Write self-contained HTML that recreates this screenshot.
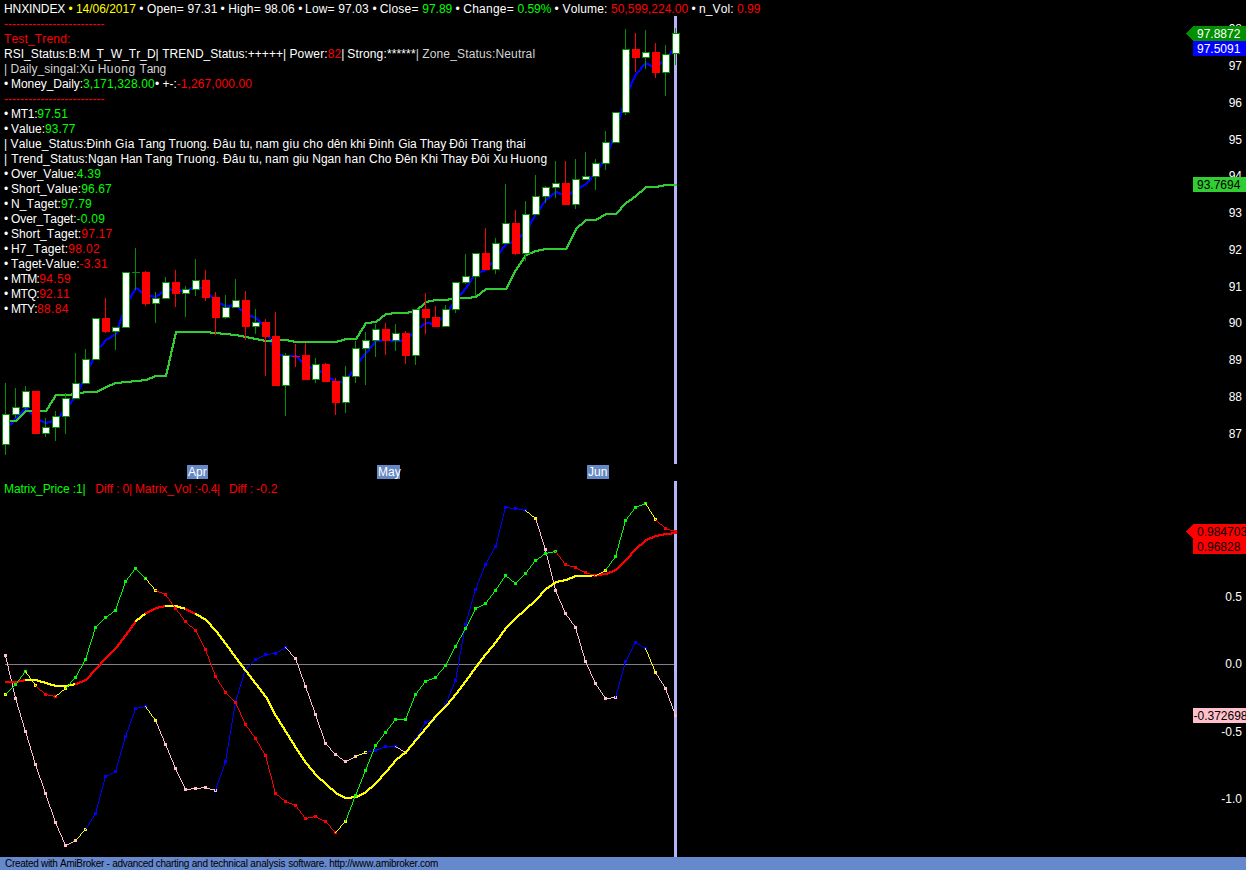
<!DOCTYPE html>
<html><head><meta charset="utf-8"><title>HNXINDEX</title>
<style>
html,body{margin:0;padding:0;background:#000;}
body{width:1246px;height:870px;position:relative;overflow:hidden;font-family:"Liberation Sans",sans-serif;font-size:12px;color:#fff;font-kerning:none;}
.l{position:absolute;left:4px;height:15px;line-height:15px;white-space:pre;}
.ax{position:absolute;right:4px;height:15px;line-height:15px;text-align:right;white-space:pre;}
.tg{position:absolute;height:15px;line-height:15px;white-space:pre;}
.mo{position:absolute;top:465px;height:14px;line-height:14px;background:#6688c4;color:#fff;padding-left:1px;box-sizing:border-box;}
#sb{position:absolute;left:0;top:857px;width:1246px;height:13px;background:#6688cc;color:#000;font-size:10px;line-height:13px;white-space:pre;}
</style></head><body>

<div class="ax" style="top:427px">87</div>
<div class="ax" style="top:390px">88</div>
<div class="ax" style="top:353px">89</div>
<div class="ax" style="top:316px">90</div>
<div class="ax" style="top:280px">91</div>
<div class="ax" style="top:243px">92</div>
<div class="ax" style="top:206px">93</div>
<div class="ax" style="top:169px">94</div>
<div class="ax" style="top:133px">95</div>
<div class="ax" style="top:96px">96</div>
<div class="ax" style="top:59px">97</div>
<div class="ax" style="top:22px">98</div>
<div class="ax" style="top:590px">0.5</div>
<div class="ax" style="top:657px">0.0</div>
<div class="ax" style="top:725px">-0.5</div>
<div class="ax" style="top:792px">-1.0</div>
<svg width="1246" height="870" viewBox="0 0 1246 870" style="position:absolute;left:0;top:0" shape-rendering="crispEdges">
<rect x="674" y="16" width="3" height="448" fill="#b4b4fa"/>
<rect x="674" y="481" width="3" height="376" fill="#b4b4fa"/>
<path fill="#0000ff" d="M5 429h2v2h-2zM6 428h2v2h-2zM7 427h2v2h-2zM8 425h2v3h-2zM9 424h2v2h-2zM10 423h2v2h-2zM11 422h2v2h-2zM12 421h2v2h-2zM13 419h2v3h-2zM14 418h2v2h-2zM15 417h2v2h-2zM15 417h2v2h-2zM16 416h2v2h-2zM17 415h2v2h-2zM18 414h2v2h-2zM19 413h2v2h-2zM20 412h2v2h-2zM21 411h2v2h-2zM22 410h2v2h-2zM23 409h2v2h-2zM24 408h2v2h-2zM25 407h2v2h-2zM25 407h2v2h-2zM26 408h2v2h-2zM27 409h2v2h-2zM28 410h2v2h-2zM29 411h2v2h-2zM30 412h2v2h-2zM31 413h2v2h-2zM32 414h2v2h-2zM33 415h2v2h-2zM34 416h2v2h-2zM35 417h2v2h-2zM35 417h2v2h-2zM36 418h3v2h-3zM38 419h3v2h-3zM40 420h3v2h-3zM42 421h3v2h-3zM44 422h3v2h-3zM45 422h3v2h-3zM47 421h5v2h-5zM51 420h4v2h-4zM54 419h3v2h-3zM55 419h2v2h-2zM56 418h2v2h-2zM57 417h2v2h-2zM58 416h2v2h-2zM59 415h2v2h-2zM60 413h2v3h-2zM61 412h2v2h-2zM62 411h2v2h-2zM63 410h2v2h-2zM64 409h2v2h-2zM65 408h2v2h-2zM65 408h2v2h-2zM66 407h2v2h-2zM67 405h2v3h-2zM68 404h2v2h-2zM69 403h2v2h-2zM70 401h2v3h-2zM71 400h2v2h-2zM72 399h2v2h-2zM73 397h2v3h-2zM74 396h2v2h-2zM75 395h2v2h-2zM75 394h2v3h-2zM76 392h2v3h-2zM77 390h2v3h-2zM78 388h2v3h-2zM79 386h2v3h-2zM80 384h2v3h-2zM81 382h2v3h-2zM82 380h2v3h-2zM83 378h2v3h-2zM84 376h2v3h-2zM85 374h2v3h-2zM85 373h2v3h-2zM86 371h2v3h-2zM87 369h2v3h-2zM88 366h2v4h-2zM89 364h2v3h-2zM90 362h2v3h-2zM91 360h2v3h-2zM92 357h2v4h-2zM93 355h2v3h-2zM94 353h2v3h-2zM95 351h2v3h-2zM95 351h2v2h-2zM96 350h2v2h-2zM97 349h2v2h-2zM98 347h2v3h-2zM99 346h2v2h-2zM100 345h2v2h-2zM101 344h2v2h-2zM102 343h2v2h-2zM103 341h2v3h-2zM104 340h2v2h-2zM105 339h2v2h-2zM105 339h2v2h-2zM106 338h3v2h-3zM108 337h3v2h-3zM110 336h2v2h-2zM111 335h3v2h-3zM113 334h3v2h-3zM115 333h2v2h-2zM115 332h2v3h-2zM116 329h2v4h-2zM117 326h2v4h-2zM118 323h2v4h-2zM119 320h2v4h-2zM120 318h2v3h-2zM121 315h2v4h-2zM122 312h2v4h-2zM123 309h2v4h-2zM124 306h2v4h-2zM125 304h2v3h-2zM125 304h2v2h-2zM126 302h2v3h-2zM127 300h2v3h-2zM128 299h2v2h-2zM129 297h2v3h-2zM130 295h2v3h-2zM131 293h2v3h-2zM132 292h2v2h-2zM133 290h2v3h-2zM134 288h2v3h-2zM135 287h2v2h-2zM135 287h2v2h-2zM136 288h3v2h-3zM138 289h2v2h-2zM139 290h2v2h-2zM140 291h3v2h-3zM142 292h2v2h-2zM143 293h3v2h-3zM145 294h2v2h-2zM145 294h4v2h-4zM148 295h6v2h-6zM153 296h4v2h-4zM155 296h2v2h-2zM156 295h2v2h-2zM157 294h3v2h-3zM159 293h2v2h-2zM160 292h2v2h-2zM161 291h2v2h-2zM162 290h3v2h-3zM164 289h2v2h-2zM165 288h2v2h-2zM165 288h6v2h-6zM170 289h7v2h-7zM175 289h6v2h-6zM180 290h7v2h-7zM185 290h3v2h-3zM187 289h3v2h-3zM189 288h3v2h-3zM191 287h3v2h-3zM193 286h3v2h-3zM195 285h2v2h-2zM195 285h3v2h-3zM197 286h3v2h-3zM199 287h4v2h-4zM202 288h3v2h-3zM204 289h3v2h-3zM205 289h2v2h-2zM206 290h2v2h-2zM207 291h2v2h-2zM208 292h2v3h-2zM209 294h2v2h-2zM210 295h2v2h-2zM211 296h2v2h-2zM212 297h2v2h-2zM213 298h2v3h-2zM214 300h2v2h-2zM215 301h2v2h-2zM215 301h3v2h-3zM217 302h3v2h-3zM219 303h4v2h-4zM222 304h3v2h-3zM224 305h3v2h-3zM225 305h7v2h-7zM231 304h6v2h-6zM235 304h2v2h-2zM236 305h2v2h-2zM237 306h2v2h-2zM238 307h2v2h-2zM239 308h2v2h-2zM240 309h3v2h-3zM242 310h2v2h-2zM243 311h2v2h-2zM244 312h2v2h-2zM245 313h2v2h-2zM245 313h3v2h-3zM247 314h3v2h-3zM249 315h4v2h-4zM252 316h3v2h-3zM254 317h3v2h-3zM255 317h2v2h-2zM256 318h2v2h-2zM257 319h2v2h-2zM258 320h2v2h-2zM259 321h2v2h-2zM260 322h2v2h-2zM261 323h2v2h-2zM262 324h2v2h-2zM263 325h2v2h-2zM264 326h2v2h-2zM265 327h2v2h-2zM265 327h2v3h-2zM266 329h2v3h-2zM267 331h2v4h-2zM268 334h2v4h-2zM269 337h2v3h-2zM270 339h2v4h-2zM271 342h2v3h-2zM272 344h2v4h-2zM273 347h2v4h-2zM274 350h2v3h-2zM275 352h2v3h-2zM275 353h4v2h-4zM278 354h6v2h-6zM283 355h4v2h-4zM285 355h12v2h-12zM295 355h2v2h-2zM296 356h2v2h-2zM297 357h2v2h-2zM298 358h2v2h-2zM299 359h2v2h-2zM300 360h2v2h-2zM301 361h2v2h-2zM302 362h2v2h-2zM303 363h2v2h-2zM304 364h2v2h-2zM305 365h2v2h-2zM305 365h3v2h-3zM307 366h4v2h-4zM310 367h5v2h-5zM314 368h3v2h-3zM315 368h2v2h-2zM316 369h3v2h-3zM318 370h3v2h-3zM320 371h3v2h-3zM322 372h3v2h-3zM324 373h3v2h-3zM325 373h2v2h-2zM326 374h2v2h-2zM327 375h2v2h-2zM328 376h2v2h-2zM329 377h2v2h-2zM330 378h3v2h-3zM332 379h2v2h-2zM333 380h2v2h-2zM334 381h2v2h-2zM335 382h2v2h-2zM335 382h4v2h-4zM338 381h6v2h-6zM343 380h4v2h-4zM345 380h2v2h-2zM346 378h2v3h-2zM347 377h2v2h-2zM348 375h2v3h-2zM349 374h2v2h-2zM350 372h2v3h-2zM351 371h2v2h-2zM352 369h2v3h-2zM353 368h2v2h-2zM354 366h2v3h-2zM355 365h2v2h-2zM355 365h2v2h-2zM356 364h2v2h-2zM357 362h2v3h-2zM358 361h2v2h-2zM359 360h2v2h-2zM360 358h2v3h-2zM361 357h2v2h-2zM362 356h2v2h-2zM363 354h2v3h-2zM364 353h2v2h-2zM365 352h2v2h-2zM365 352h2v2h-2zM366 351h2v2h-2zM367 350h2v2h-2zM368 348h2v3h-2zM369 347h2v2h-2zM370 346h2v2h-2zM371 345h2v2h-2zM372 344h2v2h-2zM373 342h2v3h-2zM374 341h2v2h-2zM375 340h2v2h-2zM375 340h7v2h-7zM381 339h6v2h-6zM385 339h6v2h-6zM390 340h7v2h-7zM395 340h7v2h-7zM401 339h6v2h-6zM405 339h2v2h-2zM406 338h2v2h-2zM407 337h2v2h-2zM408 336h2v2h-2zM409 335h2v2h-2zM410 334h2v2h-2zM411 333h2v2h-2zM412 332h2v2h-2zM413 331h2v2h-2zM414 330h2v2h-2zM415 329h2v2h-2zM415 329h2v2h-2zM416 328h3v2h-3zM418 327h2v2h-2zM419 326h3v2h-3zM421 325h2v2h-2zM422 324h2v2h-2zM423 323h3v2h-3zM425 322h2v2h-2zM425 322h6v2h-6zM430 323h7v2h-7zM435 323h2v2h-2zM436 322h2v2h-2zM437 321h2v2h-2zM438 320h2v2h-2zM439 319h2v2h-2zM440 318h2v2h-2zM441 317h2v2h-2zM442 316h2v2h-2zM443 315h2v2h-2zM444 314h2v2h-2zM445 313h2v2h-2zM445 313h2v2h-2zM446 311h2v3h-2zM447 310h2v2h-2zM448 309h2v2h-2zM449 307h2v3h-2zM450 306h2v2h-2zM451 304h2v3h-2zM452 303h2v2h-2zM453 302h2v2h-2zM454 300h2v3h-2zM455 299h2v2h-2zM455 299h2v2h-2zM456 298h2v2h-2zM457 297h2v2h-2zM458 295h2v3h-2zM459 294h2v2h-2zM460 293h2v2h-2zM461 292h2v2h-2zM462 291h2v2h-2zM463 289h2v3h-2zM464 288h2v2h-2zM465 287h2v2h-2zM465 287h2v2h-2zM466 285h2v3h-2zM467 284h2v2h-2zM468 282h2v3h-2zM469 281h2v2h-2zM470 279h2v3h-2zM471 278h2v2h-2zM472 276h2v3h-2zM473 275h2v2h-2zM474 273h2v3h-2zM475 272h2v2h-2zM475 272h3v2h-3zM477 271h5v2h-5zM481 270h4v2h-4zM484 269h3v2h-3zM485 269h2v2h-2zM486 268h2v2h-2zM487 267h2v2h-2zM488 265h2v3h-2zM489 264h2v2h-2zM490 263h2v2h-2zM491 262h2v2h-2zM492 261h2v2h-2zM493 259h2v3h-2zM494 258h2v2h-2zM495 257h2v2h-2zM495 257h2v2h-2zM496 255h2v3h-2zM497 254h2v2h-2zM498 253h2v2h-2zM499 251h2v3h-2zM500 250h2v2h-2zM501 248h2v3h-2zM502 247h2v2h-2zM503 246h2v2h-2zM504 244h2v3h-2zM505 243h2v2h-2zM505 243h3v2h-3zM507 242h5v2h-5zM511 241h4v2h-4zM514 240h3v2h-3zM515 240h2v2h-2zM516 239h2v2h-2zM517 238h2v2h-2zM518 237h2v2h-2zM519 236h2v2h-2zM520 235h2v2h-2zM521 234h2v2h-2zM522 233h2v2h-2zM523 232h2v2h-2zM524 231h2v2h-2zM525 230h2v2h-2zM525 230h2v2h-2zM526 228h2v3h-2zM527 226h2v3h-2zM528 225h2v2h-2zM529 223h2v3h-2zM530 221h2v3h-2zM531 219h2v3h-2zM532 218h2v2h-2zM533 216h2v3h-2zM534 214h2v3h-2zM535 213h2v2h-2zM535 213h2v2h-2zM536 211h2v3h-2zM537 210h2v2h-2zM538 209h2v2h-2zM539 207h2v3h-2zM540 206h2v2h-2zM541 204h2v3h-2zM542 203h2v2h-2zM543 202h2v2h-2zM544 200h2v3h-2zM545 199h2v2h-2zM545 199h2v2h-2zM546 198h2v2h-2zM547 197h3v2h-3zM549 196h2v2h-2zM550 195h2v2h-2zM551 194h2v2h-2zM552 193h3v2h-3zM554 192h2v2h-2zM555 191h2v2h-2zM555 191h3v2h-3zM557 192h3v2h-3zM559 193h4v2h-4zM562 194h3v2h-3zM564 195h3v2h-3zM565 195h2v2h-2zM566 194h3v2h-3zM568 193h3v2h-3zM570 192h2v2h-2zM571 191h3v2h-3zM573 190h3v2h-3zM575 189h2v2h-2zM575 189h2v2h-2zM576 188h3v2h-3zM578 187h3v2h-3zM580 186h2v2h-2zM581 185h3v2h-3zM583 184h3v2h-3zM585 183h2v2h-2zM585 183h2v2h-2zM586 182h2v2h-2zM587 181h2v2h-2zM588 180h2v2h-2zM589 179h2v2h-2zM590 177h2v3h-2zM591 176h2v2h-2zM592 175h2v2h-2zM593 174h2v2h-2zM594 173h2v2h-2zM595 172h2v2h-2zM595 172h2v2h-2zM596 170h2v3h-2zM597 169h2v2h-2zM598 167h2v3h-2zM599 165h2v3h-2zM600 164h2v2h-2zM601 162h2v3h-2zM602 161h2v2h-2zM603 159h2v3h-2zM604 157h2v3h-2zM605 156h2v2h-2zM605 155h2v3h-2zM606 153h2v3h-2zM607 150h2v4h-2zM608 148h2v3h-2zM609 145h2v4h-2zM610 143h2v3h-2zM611 140h2v4h-2zM612 138h2v3h-2zM613 135h2v4h-2zM614 133h2v3h-2zM615 131h2v3h-2zM615 130h2v3h-2zM616 126h2v5h-2zM617 123h2v4h-2zM618 119h2v5h-2zM619 115h2v5h-2zM620 112h2v4h-2zM621 108h2v5h-2zM622 105h2v4h-2zM623 101h2v5h-2zM624 97h2v5h-2zM625 95h2v3h-2zM625 94h2v3h-2zM626 92h2v3h-2zM627 90h2v3h-2zM628 88h2v3h-2zM629 86h2v3h-2zM630 83h2v4h-2zM631 81h2v3h-2zM632 79h2v3h-2zM633 77h2v3h-2zM634 75h2v3h-2zM635 73h2v3h-2zM635 73h2v2h-2zM636 72h2v2h-2zM637 71h2v2h-2zM638 70h2v2h-2zM639 69h2v2h-2zM640 67h2v3h-2zM641 66h2v2h-2zM642 65h2v2h-2zM643 64h2v2h-2zM644 63h2v2h-2zM645 62h2v2h-2zM645 62h2v2h-2zM646 63h3v2h-3zM648 64h3v2h-3zM650 65h3v2h-3zM652 66h3v2h-3zM654 67h3v2h-3zM655 67h2v2h-2zM656 66h2v2h-2zM657 65h2v2h-2zM658 64h2v2h-2zM659 63h2v2h-2zM660 62h2v2h-2zM661 61h2v2h-2zM662 60h2v2h-2zM663 59h2v2h-2zM664 58h2v2h-2zM665 57h2v2h-2zM665 57h2v2h-2zM666 56h2v2h-2zM667 55h2v2h-2zM668 54h2v2h-2zM669 53h2v2h-2zM670 51h2v3h-2zM671 50h2v2h-2zM672 49h2v2h-2zM673 48h2v2h-2zM674 47h2v2h-2zM675 46h2v2h-2z"/>
<path fill="#32cd32" d="M5 420h12v2h-12zM15 420h2v2h-2zM16 419h2v2h-2zM17 418h2v2h-2zM18 417h2v2h-2zM19 416h2v2h-2zM20 415h2v2h-2zM21 414h2v2h-2zM22 413h2v2h-2zM23 412h2v2h-2zM24 411h2v2h-2zM25 410h2v2h-2zM25 410h12v2h-12zM35 410h12v2h-12zM45 410h2v2h-2zM46 408h2v3h-2zM47 407h2v2h-2zM48 405h2v3h-2zM49 403h2v3h-2zM50 402h2v2h-2zM51 400h2v3h-2zM52 399h2v2h-2zM53 397h2v3h-2zM54 395h2v3h-2zM55 394h2v2h-2zM55 394h12v2h-12zM65 394h7v2h-7zM71 393h6v2h-6zM75 393h4v2h-4zM78 392h6v2h-6zM83 391h4v2h-4zM85 391h12v2h-12zM95 391h3v2h-3zM97 390h3v2h-3zM99 389h3v2h-3zM101 388h3v2h-3zM103 387h3v2h-3zM105 386h2v2h-2zM105 386h3v2h-3zM107 385h3v2h-3zM109 384h4v2h-4zM112 383h3v2h-3zM114 382h3v2h-3zM115 382h7v2h-7zM121 381h6v2h-6zM125 381h7v2h-7zM131 380h6v2h-6zM135 380h7v2h-7zM141 379h6v2h-6zM145 379h3v2h-3zM147 378h3v2h-3zM149 377h4v2h-4zM152 376h3v2h-3zM154 375h3v2h-3zM155 375h12v2h-12zM165 373h2v4h-2zM166 369h2v5h-2zM167 365h2v5h-2zM168 360h2v6h-2zM169 356h2v5h-2zM170 351h2v6h-2zM171 347h2v5h-2zM172 343h2v5h-2zM173 338h2v6h-2zM174 334h2v5h-2zM175 331h2v4h-2zM175 331h12v2h-12zM185 331h12v2h-12zM195 331h12v2h-12zM205 331h6v2h-6zM210 332h7v2h-7zM215 332h6v2h-6zM220 333h7v2h-7zM225 333h6v2h-6zM230 334h7v2h-7zM235 334h4v2h-4zM238 335h6v2h-6zM243 336h4v2h-4zM245 336h4v2h-4zM248 337h6v2h-6zM253 338h4v2h-4zM255 338h4v2h-4zM258 339h6v2h-6zM263 340h4v2h-4zM265 340h7v2h-7zM271 339h6v2h-6zM275 339h12v2h-12zM285 339h4v2h-4zM288 340h6v2h-6zM293 341h4v2h-4zM295 341h12v2h-12zM305 341h12v2h-12zM315 341h12v2h-12zM325 341h12v2h-12zM335 341h3v2h-3zM337 340h5v2h-5zM341 339h4v2h-4zM344 338h3v2h-3zM345 338h12v2h-12zM355 338h2v2h-2zM356 336h2v3h-2zM357 335h2v2h-2zM358 333h2v3h-2zM359 331h2v3h-2zM360 330h2v2h-2zM361 328h2v3h-2zM362 327h2v2h-2zM363 325h2v3h-2zM364 323h2v3h-2zM365 322h2v2h-2zM365 322h7v2h-7zM371 321h6v2h-6zM375 321h2v2h-2zM376 320h2v2h-2zM377 319h3v2h-3zM379 318h2v2h-2zM380 317h2v2h-2zM381 316h2v2h-2zM382 315h3v2h-3zM384 314h2v2h-2zM385 313h2v2h-2zM385 313h7v2h-7zM391 312h6v2h-6zM395 312h12v2h-12zM405 312h4v2h-4zM408 311h6v2h-6zM413 310h4v2h-4zM415 310h2v2h-2zM416 309h2v2h-2zM417 308h2v2h-2zM418 307h2v2h-2zM419 306h3v2h-3zM421 305h2v2h-2zM422 304h2v2h-2zM423 303h2v2h-2zM424 302h2v2h-2zM425 301h2v2h-2zM425 301h4v2h-4zM428 300h6v2h-6zM433 299h4v2h-4zM435 299h12v2h-12zM445 299h4v2h-4zM448 298h6v2h-6zM453 297h4v2h-4zM455 297h12v2h-12zM465 297h7v2h-7zM471 296h6v2h-6zM475 296h2v2h-2zM476 295h2v2h-2zM477 294h3v2h-3zM479 293h2v2h-2zM480 292h2v2h-2zM481 291h2v2h-2zM482 290h3v2h-3zM484 289h2v2h-2zM485 288h2v2h-2zM485 288h12v2h-12zM495 288h12v2h-12zM505 288h2v2h-2zM506 286h2v3h-2zM507 284h2v3h-2zM508 282h2v3h-2zM509 280h2v3h-2zM510 278h2v3h-2zM511 276h2v3h-2zM512 274h2v3h-2zM513 272h2v3h-2zM514 270h2v3h-2zM515 269h2v2h-2zM515 269h2v2h-2zM516 267h2v3h-2zM517 266h2v2h-2zM518 264h2v3h-2zM519 263h2v2h-2zM520 261h2v3h-2zM521 260h2v2h-2zM522 258h2v3h-2zM523 257h2v2h-2zM524 255h2v3h-2zM525 254h2v2h-2zM525 254h3v2h-3zM527 253h3v2h-3zM529 252h4v2h-4zM532 251h3v2h-3zM534 250h3v2h-3zM535 250h4v2h-4zM538 249h6v2h-6zM543 248h4v2h-4zM545 248h12v2h-12zM555 248h12v2h-12zM565 248h2v2h-2zM566 246h2v3h-2zM567 244h2v3h-2zM568 242h2v3h-2zM569 240h2v3h-2zM570 238h2v3h-2zM571 236h2v3h-2zM572 234h2v3h-2zM573 232h2v3h-2zM574 230h2v3h-2zM575 228h2v3h-2zM575 228h2v2h-2zM576 227h2v2h-2zM577 226h2v2h-2zM578 225h2v2h-2zM579 224h3v2h-3zM581 223h2v2h-2zM582 222h2v2h-2zM583 221h2v2h-2zM584 220h2v2h-2zM585 219h2v2h-2zM585 219h12v2h-12zM595 219h2v2h-2zM596 218h3v2h-3zM598 217h3v2h-3zM600 216h2v2h-2zM601 215h3v2h-3zM603 214h3v2h-3zM605 213h2v2h-2zM605 213h12v2h-12zM615 213h2v2h-2zM616 212h2v2h-2zM617 211h2v2h-2zM618 210h2v2h-2zM619 209h2v2h-2zM620 207h2v3h-2zM621 206h2v2h-2zM622 205h2v2h-2zM623 204h2v2h-2zM624 203h2v2h-2zM625 202h2v2h-2zM625 202h2v2h-2zM626 201h3v2h-3zM628 200h2v2h-2zM629 199h3v2h-3zM631 198h2v2h-2zM632 197h2v2h-2zM633 196h3v2h-3zM635 195h2v2h-2zM635 195h2v2h-2zM636 194h2v2h-2zM637 193h2v2h-2zM638 192h2v2h-2zM639 191h3v2h-3zM641 190h2v2h-2zM642 189h2v2h-2zM643 188h2v2h-2zM644 187h2v2h-2zM645 186h2v2h-2zM645 186h12v2h-12zM655 186h4v2h-4zM658 185h6v2h-6zM663 184h4v2h-4zM665 184h12v2h-12z"/>
<rect x="5" y="383" width="1" height="72" fill="#009000"/>
<rect x="2" y="414" width="8" height="31" fill="#009000"/>
<rect x="3" y="415" width="6" height="29" fill="#fff"/>
<rect x="15" y="388" width="1" height="30" fill="#009000"/>
<rect x="12" y="407" width="8" height="8" fill="#009000"/>
<rect x="13" y="408" width="6" height="6" fill="#fff"/>
<rect x="25" y="386" width="1" height="23" fill="#009000"/>
<rect x="22" y="391" width="8" height="17" fill="#009000"/>
<rect x="23" y="392" width="6" height="15" fill="#fff"/>
<rect x="35" y="391" width="1" height="43" fill="#ff0000"/>
<rect x="32" y="391" width="8" height="43" fill="#ff0000"/>
<rect x="45" y="418" width="1" height="19" fill="#009000"/>
<rect x="42" y="427" width="8" height="7" fill="#009000"/>
<rect x="43" y="428" width="6" height="5" fill="#fff"/>
<rect x="55" y="411" width="1" height="30" fill="#009000"/>
<rect x="52" y="416" width="8" height="12" fill="#009000"/>
<rect x="53" y="417" width="6" height="10" fill="#fff"/>
<rect x="65" y="393" width="1" height="41" fill="#009000"/>
<rect x="62" y="398" width="8" height="19" fill="#009000"/>
<rect x="63" y="399" width="6" height="17" fill="#fff"/>
<rect x="75" y="353" width="1" height="45" fill="#009000"/>
<rect x="72" y="383" width="8" height="16" fill="#009000"/>
<rect x="73" y="384" width="6" height="14" fill="#fff"/>
<rect x="85" y="349" width="1" height="35" fill="#009000"/>
<rect x="82" y="359" width="8" height="25" fill="#009000"/>
<rect x="83" y="360" width="6" height="23" fill="#fff"/>
<rect x="95" y="318" width="1" height="41" fill="#009000"/>
<rect x="92" y="318" width="8" height="42" fill="#009000"/>
<rect x="93" y="319" width="6" height="40" fill="#fff"/>
<rect x="105" y="298" width="1" height="35" fill="#ff0000"/>
<rect x="102" y="318" width="8" height="14" fill="#ff0000"/>
<rect x="115" y="327" width="1" height="23" fill="#009000"/>
<rect x="112" y="327" width="8" height="5" fill="#009000"/>
<rect x="113" y="328" width="6" height="3" fill="#fff"/>
<rect x="125" y="272" width="1" height="55" fill="#009000"/>
<rect x="122" y="272" width="8" height="56" fill="#009000"/>
<rect x="123" y="273" width="6" height="54" fill="#fff"/>
<rect x="135" y="248" width="1" height="42" fill="#009000"/>
<rect x="132" y="272" width="8" height="1" fill="#009000"/>
<rect x="145" y="271" width="1" height="35" fill="#ff0000"/>
<rect x="142" y="272" width="8" height="32" fill="#ff0000"/>
<rect x="155" y="292" width="1" height="31" fill="#009000"/>
<rect x="152" y="298" width="8" height="6" fill="#009000"/>
<rect x="153" y="299" width="6" height="4" fill="#fff"/>
<rect x="165" y="277" width="1" height="21" fill="#009000"/>
<rect x="162" y="282" width="8" height="17" fill="#009000"/>
<rect x="163" y="283" width="6" height="15" fill="#fff"/>
<rect x="175" y="270" width="1" height="37" fill="#ff0000"/>
<rect x="172" y="282" width="8" height="12" fill="#ff0000"/>
<rect x="185" y="286" width="1" height="31" fill="#009000"/>
<rect x="182" y="289" width="8" height="5" fill="#009000"/>
<rect x="183" y="290" width="6" height="3" fill="#fff"/>
<rect x="195" y="259" width="1" height="37" fill="#009000"/>
<rect x="192" y="280" width="8" height="10" fill="#009000"/>
<rect x="193" y="281" width="6" height="8" fill="#fff"/>
<rect x="205" y="270" width="1" height="31" fill="#ff0000"/>
<rect x="202" y="280" width="8" height="18" fill="#ff0000"/>
<rect x="215" y="292" width="1" height="43" fill="#ff0000"/>
<rect x="212" y="297" width="8" height="21" fill="#ff0000"/>
<rect x="225" y="295" width="1" height="24" fill="#009000"/>
<rect x="222" y="307" width="8" height="11" fill="#009000"/>
<rect x="223" y="308" width="6" height="9" fill="#fff"/>
<rect x="235" y="279" width="1" height="28" fill="#009000"/>
<rect x="232" y="300" width="8" height="8" fill="#009000"/>
<rect x="233" y="301" width="6" height="6" fill="#fff"/>
<rect x="245" y="291" width="1" height="49" fill="#ff0000"/>
<rect x="242" y="300" width="8" height="27" fill="#ff0000"/>
<rect x="255" y="309" width="1" height="25" fill="#009000"/>
<rect x="252" y="322" width="8" height="5" fill="#009000"/>
<rect x="253" y="323" width="6" height="3" fill="#fff"/>
<rect x="265" y="319" width="1" height="57" fill="#ff0000"/>
<rect x="262" y="322" width="8" height="15" fill="#ff0000"/>
<rect x="275" y="312" width="1" height="74" fill="#ff0000"/>
<rect x="272" y="336" width="8" height="50" fill="#ff0000"/>
<rect x="285" y="353" width="1" height="63" fill="#009000"/>
<rect x="282" y="355" width="8" height="31" fill="#009000"/>
<rect x="283" y="356" width="6" height="29" fill="#fff"/>
<rect x="295" y="344" width="1" height="23" fill="#ff0000"/>
<rect x="292" y="356" width="8" height="1" fill="#ff0000"/>
<rect x="305" y="343" width="1" height="37" fill="#ff0000"/>
<rect x="302" y="355" width="8" height="25" fill="#ff0000"/>
<rect x="315" y="358" width="1" height="25" fill="#009000"/>
<rect x="312" y="364" width="8" height="16" fill="#009000"/>
<rect x="313" y="365" width="6" height="14" fill="#fff"/>
<rect x="325" y="363" width="1" height="19" fill="#ff0000"/>
<rect x="322" y="364" width="8" height="18" fill="#ff0000"/>
<rect x="335" y="378" width="1" height="37" fill="#ff0000"/>
<rect x="332" y="381" width="8" height="22" fill="#ff0000"/>
<rect x="345" y="366" width="1" height="47" fill="#009000"/>
<rect x="342" y="376" width="8" height="27" fill="#009000"/>
<rect x="343" y="377" width="6" height="25" fill="#fff"/>
<rect x="355" y="341" width="1" height="42" fill="#009000"/>
<rect x="352" y="348" width="8" height="29" fill="#009000"/>
<rect x="353" y="349" width="6" height="27" fill="#fff"/>
<rect x="365" y="332" width="1" height="53" fill="#009000"/>
<rect x="362" y="340" width="8" height="9" fill="#009000"/>
<rect x="363" y="341" width="6" height="7" fill="#fff"/>
<rect x="375" y="324" width="1" height="33" fill="#009000"/>
<rect x="372" y="329" width="8" height="12" fill="#009000"/>
<rect x="373" y="330" width="6" height="10" fill="#fff"/>
<rect x="385" y="323" width="1" height="32" fill="#ff0000"/>
<rect x="382" y="329" width="8" height="12" fill="#ff0000"/>
<rect x="395" y="324" width="1" height="27" fill="#009000"/>
<rect x="392" y="333" width="8" height="8" fill="#009000"/>
<rect x="393" y="334" width="6" height="6" fill="#fff"/>
<rect x="405" y="331" width="1" height="33" fill="#ff0000"/>
<rect x="402" y="333" width="8" height="23" fill="#ff0000"/>
<rect x="415" y="310" width="1" height="55" fill="#009000"/>
<rect x="412" y="309" width="8" height="47" fill="#009000"/>
<rect x="413" y="310" width="6" height="45" fill="#fff"/>
<rect x="425" y="293" width="1" height="41" fill="#ff0000"/>
<rect x="422" y="309" width="8" height="9" fill="#ff0000"/>
<rect x="435" y="306" width="1" height="21" fill="#ff0000"/>
<rect x="432" y="317" width="8" height="10" fill="#ff0000"/>
<rect x="445" y="305" width="1" height="21" fill="#009000"/>
<rect x="442" y="309" width="8" height="18" fill="#009000"/>
<rect x="443" y="310" width="6" height="16" fill="#fff"/>
<rect x="455" y="282" width="1" height="31" fill="#009000"/>
<rect x="452" y="282" width="8" height="28" fill="#009000"/>
<rect x="453" y="283" width="6" height="26" fill="#fff"/>
<rect x="465" y="254" width="1" height="30" fill="#009000"/>
<rect x="462" y="276" width="8" height="7" fill="#009000"/>
<rect x="463" y="277" width="6" height="5" fill="#fff"/>
<rect x="475" y="254" width="1" height="42" fill="#009000"/>
<rect x="472" y="253" width="8" height="24" fill="#009000"/>
<rect x="473" y="254" width="6" height="22" fill="#fff"/>
<rect x="485" y="228" width="1" height="42" fill="#ff0000"/>
<rect x="482" y="253" width="8" height="17" fill="#ff0000"/>
<rect x="495" y="238" width="1" height="36" fill="#009000"/>
<rect x="492" y="243" width="8" height="27" fill="#009000"/>
<rect x="493" y="244" width="6" height="25" fill="#fff"/>
<rect x="505" y="184" width="1" height="59" fill="#009000"/>
<rect x="502" y="223" width="8" height="21" fill="#009000"/>
<rect x="503" y="224" width="6" height="19" fill="#fff"/>
<rect x="515" y="210" width="1" height="45" fill="#ff0000"/>
<rect x="512" y="223" width="8" height="31" fill="#ff0000"/>
<rect x="525" y="201" width="1" height="60" fill="#009000"/>
<rect x="522" y="214" width="8" height="40" fill="#009000"/>
<rect x="523" y="215" width="6" height="38" fill="#fff"/>
<rect x="535" y="175" width="1" height="39" fill="#009000"/>
<rect x="532" y="196" width="8" height="19" fill="#009000"/>
<rect x="533" y="197" width="6" height="17" fill="#fff"/>
<rect x="545" y="186" width="1" height="17" fill="#009000"/>
<rect x="542" y="187" width="8" height="10" fill="#009000"/>
<rect x="543" y="188" width="6" height="8" fill="#fff"/>
<rect x="555" y="161" width="1" height="37" fill="#009000"/>
<rect x="552" y="183" width="8" height="5" fill="#009000"/>
<rect x="553" y="184" width="6" height="3" fill="#fff"/>
<rect x="565" y="161" width="1" height="44" fill="#ff0000"/>
<rect x="562" y="183" width="8" height="22" fill="#ff0000"/>
<rect x="575" y="159" width="1" height="50" fill="#009000"/>
<rect x="572" y="179" width="8" height="26" fill="#009000"/>
<rect x="573" y="180" width="6" height="24" fill="#fff"/>
<rect x="585" y="152" width="1" height="27" fill="#009000"/>
<rect x="582" y="176" width="8" height="4" fill="#009000"/>
<rect x="583" y="177" width="6" height="2" fill="#fff"/>
<rect x="595" y="159" width="1" height="31" fill="#009000"/>
<rect x="592" y="163" width="8" height="14" fill="#009000"/>
<rect x="593" y="164" width="6" height="12" fill="#fff"/>
<rect x="605" y="131" width="1" height="39" fill="#009000"/>
<rect x="602" y="142" width="8" height="22" fill="#009000"/>
<rect x="603" y="143" width="6" height="20" fill="#fff"/>
<rect x="615" y="112" width="1" height="30" fill="#009000"/>
<rect x="612" y="112" width="8" height="31" fill="#009000"/>
<rect x="613" y="113" width="6" height="29" fill="#fff"/>
<rect x="625" y="29" width="1" height="86" fill="#009000"/>
<rect x="622" y="49" width="8" height="64" fill="#009000"/>
<rect x="623" y="50" width="6" height="62" fill="#fff"/>
<rect x="635" y="33" width="1" height="39" fill="#ff0000"/>
<rect x="632" y="49" width="8" height="9" fill="#ff0000"/>
<rect x="645" y="30" width="1" height="39" fill="#009000"/>
<rect x="642" y="52" width="8" height="6" fill="#009000"/>
<rect x="643" y="53" width="6" height="4" fill="#fff"/>
<rect x="655" y="43" width="1" height="35" fill="#ff0000"/>
<rect x="652" y="52" width="8" height="21" fill="#ff0000"/>
<rect x="665" y="45" width="1" height="51" fill="#009000"/>
<rect x="662" y="54" width="8" height="19" fill="#009000"/>
<rect x="663" y="55" width="6" height="17" fill="#fff"/>
<rect x="675" y="28" width="1" height="37" fill="#009000"/>
<rect x="672" y="33" width="8" height="21" fill="#009000"/>
<rect x="673" y="34" width="6" height="19" fill="#fff"/>
<rect x="5" y="664" width="669" height="1" fill="#808080"/>
<rect x="4" y="654" width="3" height="3" fill="#ffc0cb"/>
<rect x="14" y="697" width="3" height="3" fill="#ffc0cb"/>
<rect x="24" y="730" width="3" height="3" fill="#ffc0cb"/>
<rect x="34" y="763" width="3" height="3" fill="#ffc0cb"/>
<rect x="44" y="792" width="3" height="3" fill="#ffc0cb"/>
<rect x="54" y="821" width="3" height="3" fill="#ffc0cb"/>
<rect x="64" y="844" width="3" height="3" fill="#ffc0cb"/>
<rect x="74" y="839" width="3" height="3" fill="#ffc0cb"/>
<rect x="84" y="828" width="3" height="3" fill="#ffff00"/>
<rect x="94" y="812" width="3" height="3" fill="#0000ff"/>
<rect x="104" y="775" width="3" height="3" fill="#0000ff"/>
<rect x="114" y="770" width="3" height="3" fill="#0000ff"/>
<rect x="124" y="735" width="3" height="3" fill="#0000ff"/>
<rect x="134" y="707" width="3" height="3" fill="#0000ff"/>
<rect x="144" y="705" width="3" height="3" fill="#0000ff"/>
<rect x="154" y="719" width="3" height="3" fill="#ffff00"/>
<rect x="164" y="743" width="3" height="3" fill="#ffc0cb"/>
<rect x="174" y="767" width="3" height="3" fill="#ffc0cb"/>
<rect x="184" y="788" width="3" height="3" fill="#ffc0cb"/>
<rect x="194" y="787" width="3" height="3" fill="#ffc0cb"/>
<rect x="204" y="786" width="3" height="3" fill="#ffc0cb"/>
<rect x="214" y="789" width="3" height="3" fill="#ffc0cb"/>
<rect x="224" y="760" width="3" height="3" fill="#0000ff"/>
<rect x="234" y="700" width="3" height="3" fill="#0000ff"/>
<rect x="244" y="668" width="3" height="3" fill="#0000ff"/>
<rect x="254" y="658" width="3" height="3" fill="#0000ff"/>
<rect x="264" y="653" width="3" height="3" fill="#0000ff"/>
<rect x="274" y="652" width="3" height="3" fill="#0000ff"/>
<rect x="284" y="646" width="3" height="3" fill="#0000ff"/>
<rect x="294" y="657" width="3" height="3" fill="#ffc0cb"/>
<rect x="304" y="685" width="3" height="3" fill="#ffc0cb"/>
<rect x="314" y="713" width="3" height="3" fill="#ffc0cb"/>
<rect x="324" y="742" width="3" height="3" fill="#ffc0cb"/>
<rect x="334" y="753" width="3" height="3" fill="#ffc0cb"/>
<rect x="344" y="760" width="3" height="3" fill="#ffc0cb"/>
<rect x="354" y="755" width="3" height="3" fill="#ffc0cb"/>
<rect x="364" y="751" width="3" height="3" fill="#ffff00"/>
<rect x="374" y="749" width="3" height="3" fill="#0000ff"/>
<rect x="384" y="745" width="3" height="3" fill="#0000ff"/>
<rect x="394" y="745" width="3" height="3" fill="#0000ff"/>
<rect x="404" y="751" width="3" height="3" fill="#ffc0cb"/>
<rect x="414" y="738" width="3" height="3" fill="#0000ff"/>
<rect x="424" y="721" width="3" height="3" fill="#0000ff"/>
<rect x="434" y="716" width="3" height="3" fill="#0000ff"/>
<rect x="444" y="703" width="3" height="3" fill="#0000ff"/>
<rect x="454" y="679" width="3" height="3" fill="#0000ff"/>
<rect x="464" y="623" width="3" height="3" fill="#0000ff"/>
<rect x="474" y="588" width="3" height="3" fill="#0000ff"/>
<rect x="484" y="563" width="3" height="3" fill="#0000ff"/>
<rect x="494" y="545" width="3" height="3" fill="#0000ff"/>
<rect x="504" y="506" width="3" height="3" fill="#0000ff"/>
<rect x="514" y="507" width="3" height="3" fill="#0000ff"/>
<rect x="524" y="509" width="3" height="3" fill="#0000ff"/>
<rect x="534" y="517" width="3" height="3" fill="#ffff00"/>
<rect x="544" y="548" width="3" height="3" fill="#ffc0cb"/>
<rect x="554" y="589" width="3" height="3" fill="#ffc0cb"/>
<rect x="564" y="612" width="3" height="3" fill="#ffc0cb"/>
<rect x="574" y="626" width="3" height="3" fill="#ffc0cb"/>
<rect x="584" y="660" width="3" height="3" fill="#ffc0cb"/>
<rect x="594" y="682" width="3" height="3" fill="#ffc0cb"/>
<rect x="604" y="697" width="3" height="3" fill="#ffc0cb"/>
<rect x="614" y="696" width="3" height="3" fill="#ffc0cb"/>
<rect x="624" y="660" width="3" height="3" fill="#0000ff"/>
<rect x="634" y="641" width="3" height="3" fill="#0000ff"/>
<rect x="644" y="647" width="3" height="3" fill="#0000ff"/>
<rect x="654" y="671" width="3" height="3" fill="#ffff00"/>
<rect x="664" y="687" width="3" height="3" fill="#ffc0cb"/>
<rect x="674" y="714" width="3" height="3" fill="#ffc0cb"/>
<path fill="#ffc0cb" d="M5 655h1v3h-1zM6 658h1v4h-1zM7 662h1v4h-1zM8 666h1v5h-1zM9 671h1v4h-1zM10 675h1v4h-1zM11 679h1v4h-1zM12 683h1v5h-1zM13 688h1v4h-1zM14 692h1v4h-1zM15 696h1v3h-1z"/>
<path fill="#ffc0cb" d="M15 698h1v2h-1zM16 700h1v3h-1zM17 703h1v4h-1zM18 707h1v3h-1zM19 710h1v3h-1zM20 713h1v4h-1zM21 717h1v3h-1zM22 720h1v3h-1zM23 723h1v4h-1zM24 727h1v3h-1zM25 730h1v2h-1z"/>
<path fill="#ffc0cb" d="M25 731h1v2h-1zM26 733h1v3h-1zM27 736h1v4h-1zM28 740h1v3h-1zM29 743h1v3h-1zM30 746h1v4h-1zM31 750h1v3h-1zM32 753h1v3h-1zM33 756h1v4h-1zM34 760h1v3h-1zM35 763h1v2h-1z"/>
<path fill="#ffc0cb" d="M35 764h1v2h-1zM36 766h1v3h-1zM37 769h1v3h-1zM38 772h1v3h-1zM39 775h1v3h-1zM40 778h1v2h-1zM41 780h1v3h-1zM42 783h1v3h-1zM43 786h1v3h-1zM44 789h1v3h-1zM45 792h1v2h-1z"/>
<path fill="#ffc0cb" d="M45 793h1v2h-1zM46 795h1v3h-1zM47 798h1v3h-1zM48 801h1v3h-1zM49 804h1v3h-1zM50 807h1v2h-1zM51 809h1v3h-1zM52 812h1v3h-1zM53 815h1v3h-1zM54 818h1v3h-1zM55 821h1v2h-1z"/>
<path fill="#ffc0cb" d="M55 822h1v2h-1zM56 824h1v2h-1zM57 826h1v2h-1zM58 828h1v3h-1zM59 831h1v2h-1zM60 833h1v2h-1zM61 835h1v2h-1zM62 837h1v3h-1zM63 840h1v2h-1zM64 842h1v2h-1zM65 844h1v2h-1z"/>
<path fill="#ffc0cb" d="M65 845h2v1h-2zM67 844h2v1h-2zM69 843h2v1h-2zM71 842h2v1h-2zM73 841h2v1h-2zM75 840h1v1h-1z"/>
<path fill="#ffff00" d="M75 840h1v1h-1zM76 839h1v1h-1zM77 838h1v1h-1zM78 837h1v1h-1zM79 836h1v1h-1zM80 834h1v2h-1zM81 833h1v1h-1zM82 832h1v1h-1zM83 831h1v1h-1zM84 830h1v1h-1zM85 829h1v1h-1z"/>
<path fill="#0000ff" d="M85 829h1v1h-1zM86 827h1v2h-1zM87 826h1v1h-1zM88 824h1v2h-1zM89 822h1v2h-1zM90 821h1v1h-1zM91 819h1v2h-1zM92 818h1v1h-1zM93 816h1v2h-1zM94 814h1v2h-1zM95 813h1v1h-1z"/>
<path fill="#0000ff" d="M95 812h1v2h-1zM96 808h1v4h-1zM97 804h1v4h-1zM98 801h1v3h-1zM99 797h1v4h-1zM100 793h1v4h-1zM101 789h1v4h-1zM102 786h1v3h-1zM103 782h1v4h-1zM104 778h1v4h-1zM105 776h1v2h-1z"/>
<path fill="#0000ff" d="M105 776h2v1h-2zM107 775h2v1h-2zM109 774h2v1h-2zM111 773h2v1h-2zM113 772h2v1h-2zM115 771h1v1h-1z"/>
<path fill="#0000ff" d="M115 770h1v2h-1zM116 766h1v4h-1zM117 763h1v3h-1zM118 759h1v4h-1zM119 756h1v3h-1zM120 752h1v4h-1zM121 749h1v3h-1zM122 745h1v4h-1zM123 742h1v3h-1zM124 738h1v4h-1zM125 736h1v2h-1z"/>
<path fill="#0000ff" d="M125 735h1v2h-1zM126 732h1v3h-1zM127 730h1v2h-1zM128 727h1v3h-1zM129 724h1v3h-1zM130 721h1v3h-1zM131 718h1v3h-1zM132 716h1v2h-1zM133 713h1v3h-1zM134 710h1v3h-1zM135 708h1v2h-1z"/>
<path fill="#0000ff" d="M135 708h3v1h-3zM138 707h5v1h-5zM143 706h3v1h-3z"/>
<path fill="#ffff00" d="M145 706h1v1h-1zM146 707h1v2h-1zM147 709h1v1h-1zM148 710h1v1h-1zM149 711h1v2h-1zM150 713h1v1h-1zM151 714h1v2h-1zM152 716h1v1h-1zM153 717h1v1h-1zM154 718h1v2h-1zM155 720h1v1h-1z"/>
<path fill="#ffc0cb" d="M155 720h1v2h-1zM156 722h1v2h-1zM157 724h1v2h-1zM158 726h1v3h-1zM159 729h1v2h-1zM160 731h1v3h-1zM161 734h1v2h-1zM162 736h1v2h-1zM163 738h1v3h-1zM164 741h1v2h-1zM165 743h1v2h-1z"/>
<path fill="#ffc0cb" d="M165 744h1v2h-1zM166 746h1v2h-1zM167 748h1v2h-1zM168 750h1v3h-1zM169 753h1v2h-1zM170 755h1v3h-1zM171 758h1v2h-1zM172 760h1v2h-1zM173 762h1v3h-1zM174 765h1v2h-1zM175 767h1v2h-1z"/>
<path fill="#ffc0cb" d="M175 768h1v2h-1zM176 770h1v2h-1zM177 772h1v2h-1zM178 774h1v2h-1zM179 776h1v2h-1zM180 778h1v2h-1zM181 780h1v2h-1zM182 782h1v2h-1zM183 784h1v2h-1zM184 786h1v2h-1zM185 788h1v2h-1z"/>
<path fill="#ffc0cb" d="M185 789h6v1h-6zM191 788h5v1h-5z"/>
<path fill="#ffc0cb" d="M195 788h6v1h-6zM201 787h5v1h-5z"/>
<path fill="#ffc0cb" d="M205 787h2v1h-2zM207 788h3v1h-3zM210 789h4v1h-4zM214 790h2v1h-2z"/>
<path fill="#0000ff" d="M215 789h1v2h-1zM216 786h1v3h-1zM217 783h1v3h-1zM218 780h1v3h-1zM219 777h1v3h-1zM220 775h1v2h-1zM221 772h1v3h-1zM222 769h1v3h-1zM223 766h1v3h-1zM224 763h1v3h-1zM225 761h1v2h-1z"/>
<path fill="#0000ff" d="M225 759h1v3h-1zM226 753h1v6h-1zM227 747h1v6h-1zM228 741h1v6h-1zM229 735h1v6h-1zM230 729h1v6h-1zM231 723h1v6h-1zM232 717h1v6h-1zM233 711h1v6h-1zM234 705h1v6h-1zM235 701h1v4h-1z"/>
<path fill="#0000ff" d="M235 700h1v2h-1zM236 697h1v3h-1zM237 694h1v3h-1zM238 690h1v4h-1zM239 687h1v3h-1zM240 684h1v3h-1zM241 681h1v3h-1zM242 678h1v3h-1zM243 674h1v4h-1zM244 671h1v3h-1zM245 669h1v2h-1z"/>
<path fill="#0000ff" d="M245 669h1v1h-1zM246 668h1v1h-1zM247 667h1v1h-1zM248 666h1v1h-1zM249 665h1v1h-1zM250 664h1v1h-1zM251 663h1v1h-1zM252 662h1v1h-1zM253 661h1v1h-1zM254 660h1v1h-1zM255 659h1v1h-1z"/>
<path fill="#0000ff" d="M255 659h2v1h-2zM257 658h2v1h-2zM259 657h2v1h-2zM261 656h2v1h-2zM263 655h2v1h-2zM265 654h1v1h-1z"/>
<path fill="#0000ff" d="M265 654h6v1h-6zM271 653h5v1h-5z"/>
<path fill="#0000ff" d="M275 653h1v1h-1zM276 652h2v1h-2zM278 651h2v1h-2zM280 650h1v1h-1zM281 649h2v1h-2zM283 648h2v1h-2zM285 647h1v1h-1z"/>
<path fill="#ffc0cb" d="M285 647h1v1h-1zM286 648h1v1h-1zM287 649h1v1h-1zM288 650h1v1h-1zM289 651h1v1h-1zM290 652h1v2h-1zM291 654h1v1h-1zM292 655h1v1h-1zM293 656h1v1h-1zM294 657h1v1h-1zM295 658h1v1h-1z"/>
<path fill="#ffc0cb" d="M295 658h1v2h-1zM296 660h1v3h-1zM297 663h1v2h-1zM298 665h1v3h-1zM299 668h1v3h-1zM300 671h1v3h-1zM301 674h1v3h-1zM302 677h1v2h-1zM303 679h1v3h-1zM304 682h1v3h-1zM305 685h1v2h-1z"/>
<path fill="#ffc0cb" d="M305 686h1v2h-1zM306 688h1v3h-1zM307 691h1v2h-1zM308 693h1v3h-1zM309 696h1v3h-1zM310 699h1v3h-1zM311 702h1v3h-1zM312 705h1v2h-1zM313 707h1v3h-1zM314 710h1v3h-1zM315 713h1v2h-1z"/>
<path fill="#ffc0cb" d="M315 714h1v2h-1zM316 716h1v3h-1zM317 719h1v3h-1zM318 722h1v3h-1zM319 725h1v3h-1zM320 728h1v2h-1zM321 730h1v3h-1zM322 733h1v3h-1zM323 736h1v3h-1zM324 739h1v3h-1zM325 742h1v2h-1z"/>
<path fill="#ffc0cb" d="M325 743h1v1h-1zM326 744h1v1h-1zM327 745h1v1h-1zM328 746h1v1h-1zM329 747h1v1h-1zM330 748h1v2h-1zM331 750h1v1h-1zM332 751h1v1h-1zM333 752h1v1h-1zM334 753h1v1h-1zM335 754h1v1h-1z"/>
<path fill="#ffc0cb" d="M335 754h1v1h-1zM336 755h2v1h-2zM338 756h1v1h-1zM339 757h1v1h-1zM340 758h2v1h-2zM342 759h1v1h-1zM343 760h2v1h-2zM345 761h1v1h-1z"/>
<path fill="#ffc0cb" d="M345 761h2v1h-2zM347 760h2v1h-2zM349 759h2v1h-2zM351 758h2v1h-2zM353 757h2v1h-2zM355 756h1v1h-1z"/>
<path fill="#ffff00" d="M355 756h2v1h-2zM357 755h2v1h-2zM359 754h3v1h-3zM362 753h2v1h-2zM364 752h2v1h-2z"/>
<path fill="#0000ff" d="M365 752h3v1h-3zM368 751h5v1h-5zM373 750h3v1h-3z"/>
<path fill="#0000ff" d="M375 750h2v1h-2zM377 749h2v1h-2zM379 748h3v1h-3zM382 747h2v1h-2zM384 746h2v1h-2z"/>
<path fill="#0000ff" d="M385 746h11v1h-11z"/>
<path fill="#ffc0cb" d="M395 746h1v1h-1zM396 747h2v1h-2zM398 748h2v1h-2zM400 749h1v1h-1zM401 750h2v1h-2zM403 751h2v1h-2zM405 752h1v1h-1z"/>
<path fill="#0000ff" d="M405 752h1v1h-1zM406 751h1v1h-1zM407 749h1v2h-1zM408 748h1v1h-1zM409 747h1v1h-1zM410 745h1v2h-1zM411 744h1v1h-1zM412 743h1v1h-1zM413 741h1v2h-1zM414 740h1v1h-1zM415 739h1v1h-1z"/>
<path fill="#0000ff" d="M415 739h1v1h-1zM416 737h1v2h-1zM417 735h1v2h-1zM418 734h1v1h-1zM419 732h1v2h-1zM420 730h1v2h-1zM421 728h1v2h-1zM422 727h1v1h-1zM423 725h1v2h-1zM424 723h1v2h-1zM425 722h1v1h-1z"/>
<path fill="#0000ff" d="M425 722h2v1h-2zM427 721h2v1h-2zM429 720h2v1h-2zM431 719h2v1h-2zM433 718h2v1h-2zM435 717h1v1h-1z"/>
<path fill="#0000ff" d="M435 717h1v1h-1zM436 716h1v1h-1zM437 714h1v2h-1zM438 713h1v1h-1zM439 712h1v1h-1zM440 710h1v2h-1zM441 709h1v1h-1zM442 708h1v1h-1zM443 706h1v2h-1zM444 705h1v1h-1zM445 704h1v1h-1z"/>
<path fill="#0000ff" d="M445 703h1v2h-1zM446 701h1v2h-1zM447 699h1v2h-1zM448 696h1v3h-1zM449 694h1v2h-1zM450 691h1v3h-1zM451 689h1v2h-1zM452 687h1v2h-1zM453 684h1v3h-1zM454 682h1v2h-1zM455 680h1v2h-1z"/>
<path fill="#0000ff" d="M455 678h1v3h-1zM456 672h1v6h-1zM457 667h1v5h-1zM458 661h1v6h-1zM459 655h1v6h-1zM460 650h1v5h-1zM461 644h1v6h-1zM462 639h1v5h-1zM463 633h1v6h-1zM464 627h1v6h-1zM465 624h1v3h-1z"/>
<path fill="#0000ff" d="M465 623h1v2h-1zM466 619h1v4h-1zM467 616h1v3h-1zM468 612h1v4h-1zM469 609h1v3h-1zM470 605h1v4h-1zM471 602h1v3h-1zM472 598h1v4h-1zM473 595h1v3h-1zM474 591h1v4h-1zM475 589h1v2h-1z"/>
<path fill="#0000ff" d="M475 588h1v2h-1zM476 586h1v2h-1zM477 583h1v3h-1zM478 581h1v2h-1zM479 578h1v3h-1zM480 576h1v2h-1zM481 573h1v3h-1zM482 571h1v2h-1zM483 568h1v3h-1zM484 566h1v2h-1zM485 564h1v2h-1z"/>
<path fill="#0000ff" d="M485 564h1v1h-1zM486 562h1v2h-1zM487 560h1v2h-1zM488 558h1v2h-1zM489 556h1v2h-1zM490 555h1v1h-1zM491 553h1v2h-1zM492 551h1v2h-1zM493 549h1v2h-1zM494 547h1v2h-1zM495 546h1v1h-1z"/>
<path fill="#0000ff" d="M495 545h1v2h-1zM496 541h1v4h-1zM497 537h1v4h-1zM498 533h1v4h-1zM499 529h1v4h-1zM500 525h1v4h-1zM501 521h1v4h-1zM502 517h1v4h-1zM503 513h1v4h-1zM504 509h1v4h-1zM505 507h1v2h-1z"/>
<path fill="#0000ff" d="M505 507h5v1h-5zM510 508h6v1h-6z"/>
<path fill="#0000ff" d="M515 508h3v1h-3zM518 509h5v1h-5zM523 510h3v1h-3z"/>
<path fill="#ffff00" d="M525 510h1v1h-1zM526 511h1v1h-1zM527 512h2v1h-2zM529 513h1v1h-1zM530 514h1v1h-1zM531 515h1v1h-1zM532 516h2v1h-2zM534 517h1v1h-1zM535 518h1v1h-1z"/>
<path fill="#ffc0cb" d="M535 518h1v2h-1zM536 520h1v3h-1zM537 523h1v3h-1zM538 526h1v3h-1zM539 529h1v3h-1zM540 532h1v4h-1zM541 536h1v3h-1zM542 539h1v3h-1zM543 542h1v3h-1zM544 545h1v3h-1zM545 548h1v2h-1z"/>
<path fill="#ffc0cb" d="M545 549h1v3h-1zM546 552h1v4h-1zM547 556h1v4h-1zM548 560h1v4h-1zM549 564h1v4h-1zM550 568h1v4h-1zM551 572h1v4h-1zM552 576h1v4h-1zM553 580h1v4h-1zM554 584h1v4h-1zM555 588h1v3h-1z"/>
<path fill="#ffc0cb" d="M555 590h1v2h-1zM556 592h1v2h-1zM557 594h1v2h-1zM558 596h1v3h-1zM559 599h1v2h-1zM560 601h1v2h-1zM561 603h1v2h-1zM562 605h1v3h-1zM563 608h1v2h-1zM564 610h1v2h-1zM565 612h1v2h-1z"/>
<path fill="#ffc0cb" d="M565 613h1v1h-1zM566 614h1v2h-1zM567 616h1v1h-1zM568 617h1v1h-1zM569 618h1v2h-1zM570 620h1v1h-1zM571 621h1v2h-1zM572 623h1v1h-1zM573 624h1v1h-1zM574 625h1v2h-1zM575 627h1v1h-1z"/>
<path fill="#ffc0cb" d="M575 627h1v2h-1zM576 629h1v4h-1zM577 633h1v3h-1zM578 636h1v3h-1zM579 639h1v4h-1zM580 643h1v3h-1zM581 646h1v4h-1zM582 650h1v3h-1zM583 653h1v3h-1zM584 656h1v4h-1zM585 660h1v2h-1z"/>
<path fill="#ffc0cb" d="M585 661h1v2h-1zM586 663h1v2h-1zM587 665h1v2h-1zM588 667h1v2h-1zM589 669h1v2h-1zM590 671h1v3h-1zM591 674h1v2h-1zM592 676h1v2h-1zM593 678h1v2h-1zM594 680h1v2h-1zM595 682h1v2h-1z"/>
<path fill="#ffc0cb" d="M595 683h1v1h-1zM596 684h1v2h-1zM597 686h1v1h-1zM598 687h1v2h-1zM599 689h1v1h-1zM600 690h1v2h-1zM601 692h1v1h-1zM602 693h1v2h-1zM603 695h1v1h-1zM604 696h1v2h-1zM605 698h1v1h-1z"/>
<path fill="#ffc0cb" d="M605 698h6v1h-6zM611 697h5v1h-5z"/>
<path fill="#0000ff" d="M615 696h1v2h-1zM616 692h1v4h-1zM617 689h1v3h-1zM618 685h1v4h-1zM619 681h1v4h-1zM620 678h1v3h-1zM621 674h1v4h-1zM622 671h1v3h-1zM623 667h1v4h-1zM624 663h1v4h-1zM625 661h1v2h-1z"/>
<path fill="#0000ff" d="M625 661h1v1h-1zM626 659h1v2h-1zM627 657h1v2h-1zM628 655h1v2h-1zM629 653h1v2h-1zM630 651h1v2h-1zM631 649h1v2h-1zM632 647h1v2h-1zM633 645h1v2h-1zM634 643h1v2h-1zM635 642h1v1h-1z"/>
<path fill="#0000ff" d="M635 642h1v1h-1zM636 643h2v1h-2zM638 644h2v1h-2zM640 645h1v1h-1zM641 646h2v1h-2zM643 647h2v1h-2zM645 648h1v1h-1z"/>
<path fill="#ffff00" d="M645 648h1v2h-1zM646 650h1v2h-1zM647 652h1v2h-1zM648 654h1v3h-1zM649 657h1v2h-1zM650 659h1v3h-1zM651 662h1v2h-1zM652 664h1v2h-1zM653 666h1v3h-1zM654 669h1v2h-1zM655 671h1v2h-1z"/>
<path fill="#ffc0cb" d="M655 672h1v1h-1zM656 673h1v2h-1zM657 675h1v1h-1zM658 676h1v2h-1zM659 678h1v2h-1zM660 680h1v1h-1zM661 681h1v2h-1zM662 683h1v1h-1zM663 684h1v2h-1zM664 686h1v2h-1zM665 688h1v1h-1z"/>
<path fill="#ffc0cb" d="M665 688h1v2h-1zM666 690h1v3h-1zM667 693h1v2h-1zM668 695h1v3h-1zM669 698h1v3h-1zM670 701h1v2h-1zM671 703h1v3h-1zM672 706h1v3h-1zM673 709h1v2h-1zM674 711h1v3h-1zM675 714h1v2h-1z"/>
<path fill="#ff0000" d="M5 681h12v2h-12z"/>
<path fill="#ff0000" d="M15 681h4v2h-4zM18 680h6v2h-6zM23 679h4v2h-4z"/>
<path fill="#ffff00" d="M25 679h12v2h-12z"/>
<path fill="#ffff00" d="M35 679h3v2h-3zM37 680h4v2h-4zM40 681h5v2h-5zM44 682h3v2h-3z"/>
<path fill="#ffff00" d="M45 682h3v2h-3zM47 683h4v2h-4zM50 684h5v2h-5zM54 685h3v2h-3z"/>
<path fill="#ffff00" d="M55 685h12v2h-12z"/>
<path fill="#ffff00" d="M65 685h4v2h-4zM68 684h6v2h-6zM73 683h4v2h-4z"/>
<path fill="#ff0000" d="M75 683h3v2h-3zM77 682h3v2h-3zM79 681h4v2h-4zM82 680h3v2h-3zM84 679h3v2h-3z"/>
<path fill="#ff0000" d="M85 679h2v2h-2zM86 678h2v2h-2zM87 677h2v2h-2zM88 676h2v2h-2zM89 675h2v2h-2zM90 673h2v3h-2zM91 672h2v2h-2zM92 671h2v2h-2zM93 670h2v2h-2zM94 669h2v2h-2zM95 668h2v2h-2z"/>
<path fill="#ff0000" d="M95 668h2v2h-2zM96 667h2v2h-2zM97 666h2v2h-2zM98 665h2v2h-2zM99 664h2v2h-2zM100 662h2v3h-2zM101 661h2v2h-2zM102 660h2v2h-2zM103 659h2v2h-2zM104 658h2v2h-2zM105 657h2v2h-2z"/>
<path fill="#ff0000" d="M105 657h2v2h-2zM106 656h2v2h-2zM107 655h2v2h-2zM108 654h2v2h-2zM109 653h2v2h-2zM110 652h2v2h-2zM111 651h2v2h-2zM112 650h2v2h-2zM113 649h2v2h-2zM114 648h2v2h-2zM115 647h2v2h-2z"/>
<path fill="#ff0000" d="M115 647h2v2h-2zM116 646h2v2h-2zM117 644h2v3h-2zM118 643h2v2h-2zM119 642h2v2h-2zM120 640h2v3h-2zM121 639h2v2h-2zM122 638h2v2h-2zM123 636h2v3h-2zM124 635h2v2h-2zM125 634h2v2h-2z"/>
<path fill="#ff0000" d="M125 634h2v2h-2zM126 632h2v3h-2zM127 631h2v2h-2zM128 630h2v2h-2zM129 628h2v3h-2zM130 627h2v2h-2zM131 625h2v3h-2zM132 624h2v2h-2zM133 623h2v2h-2zM134 621h2v3h-2zM135 620h2v2h-2z"/>
<path fill="#ffff00" d="M135 620h2v2h-2zM136 619h2v2h-2zM137 618h3v2h-3zM139 617h2v2h-2zM140 616h2v2h-2zM141 615h2v2h-2zM142 614h3v2h-3zM144 613h2v2h-2zM145 612h2v2h-2z"/>
<path fill="#ff0000" d="M145 612h3v2h-3zM147 611h3v2h-3zM149 610h3v2h-3zM151 609h3v2h-3zM153 608h3v2h-3zM155 607h2v2h-2z"/>
<path fill="#ff0000" d="M155 607h4v2h-4zM158 606h6v2h-6zM163 605h4v2h-4z"/>
<path fill="#ffff00" d="M165 605h12v2h-12z"/>
<path fill="#ffff00" d="M175 605h3v2h-3zM177 606h4v2h-4zM180 607h5v2h-5zM184 608h3v2h-3z"/>
<path fill="#ff0000" d="M185 608h2v2h-2zM186 609h3v2h-3zM188 610h3v2h-3zM190 611h3v2h-3zM192 612h3v2h-3zM194 613h3v2h-3z"/>
<path fill="#ffff00" d="M195 613h2v2h-2zM196 614h3v2h-3zM198 615h3v2h-3zM200 616h2v2h-2zM201 617h3v2h-3zM203 618h3v2h-3zM205 619h2v2h-2z"/>
<path fill="#ffff00" d="M205 619h2v2h-2zM206 620h2v2h-2zM207 621h2v2h-2zM208 622h2v2h-2zM209 623h2v2h-2zM210 624h2v3h-2zM211 626h2v2h-2zM212 627h2v2h-2zM213 628h2v2h-2zM214 629h2v2h-2zM215 630h2v2h-2z"/>
<path fill="#ffff00" d="M215 630h2v2h-2zM216 631h2v2h-2zM217 632h2v3h-2zM218 634h2v2h-2zM219 635h2v2h-2zM220 636h2v3h-2zM221 638h2v2h-2zM222 639h2v2h-2zM223 640h2v3h-2zM224 642h2v2h-2zM225 643h2v2h-2z"/>
<path fill="#ffff00" d="M225 643h2v2h-2zM226 644h2v3h-2zM227 646h2v2h-2zM228 647h2v2h-2zM229 648h2v3h-2zM230 650h2v2h-2zM231 651h2v3h-2zM232 653h2v2h-2zM233 654h2v2h-2zM234 655h2v3h-2zM235 657h2v2h-2z"/>
<path fill="#ffff00" d="M235 657h2v2h-2zM236 658h2v2h-2zM237 659h2v3h-2zM238 661h2v2h-2zM239 662h2v2h-2zM240 663h2v3h-2zM241 665h2v2h-2zM242 666h2v2h-2zM243 667h2v3h-2zM244 669h2v2h-2zM245 670h2v2h-2z"/>
<path fill="#ffff00" d="M245 670h2v2h-2zM246 671h2v2h-2zM247 672h2v3h-2zM248 674h2v2h-2zM249 675h2v2h-2zM250 676h2v3h-2zM251 678h2v2h-2zM252 679h2v2h-2zM253 680h2v3h-2zM254 682h2v2h-2zM255 683h2v2h-2z"/>
<path fill="#ffff00" d="M255 683h2v2h-2zM256 684h2v2h-2zM257 685h2v3h-2zM258 687h2v2h-2zM259 688h2v2h-2zM260 689h2v3h-2zM261 691h2v2h-2zM262 692h2v2h-2zM263 693h2v3h-2zM264 695h2v2h-2zM265 696h2v2h-2z"/>
<path fill="#ffff00" d="M265 696h2v2h-2zM266 697h2v3h-2zM267 699h2v3h-2zM268 701h2v3h-2zM269 703h2v3h-2zM270 705h2v3h-2zM271 707h2v3h-2zM272 709h2v3h-2zM273 711h2v3h-2zM274 713h2v3h-2zM275 715h2v2h-2z"/>
<path fill="#ffff00" d="M275 715h2v2h-2zM276 716h2v3h-2zM277 718h2v2h-2zM278 719h2v3h-2zM279 721h2v3h-2zM280 723h2v2h-2zM281 724h2v3h-2zM282 726h2v2h-2zM283 727h2v3h-2zM284 729h2v3h-2zM285 731h2v2h-2z"/>
<path fill="#ffff00" d="M285 731h2v2h-2zM286 732h2v3h-2zM287 734h2v2h-2zM288 735h2v3h-2zM289 737h2v3h-2zM290 739h2v2h-2zM291 740h2v3h-2zM292 742h2v2h-2zM293 743h2v3h-2zM294 745h2v3h-2zM295 747h2v2h-2z"/>
<path fill="#ffff00" d="M295 747h2v2h-2zM296 748h2v3h-2zM297 750h2v2h-2zM298 751h2v3h-2zM299 753h2v2h-2zM300 754h2v3h-2zM301 756h2v2h-2zM302 757h2v3h-2zM303 759h2v2h-2zM304 760h2v3h-2zM305 762h2v2h-2z"/>
<path fill="#ffff00" d="M305 762h2v2h-2zM306 763h2v2h-2zM307 764h2v2h-2zM308 765h2v3h-2zM309 767h2v2h-2zM310 768h2v2h-2zM311 769h2v2h-2zM312 770h2v2h-2zM313 771h2v3h-2zM314 773h2v2h-2zM315 774h2v2h-2z"/>
<path fill="#ffff00" d="M315 774h2v2h-2zM316 775h2v2h-2zM317 776h2v2h-2zM318 777h2v2h-2zM319 778h2v2h-2zM320 779h3v2h-3zM322 780h2v2h-2zM323 781h2v2h-2zM324 782h2v2h-2zM325 783h2v2h-2z"/>
<path fill="#ffff00" d="M325 783h2v2h-2zM326 784h2v2h-2zM327 785h2v2h-2zM328 786h2v2h-2zM329 787h2v2h-2zM330 788h3v2h-3zM332 789h2v2h-2zM333 790h2v2h-2zM334 791h2v2h-2zM335 792h2v2h-2z"/>
<path fill="#ffff00" d="M335 792h2v2h-2zM336 793h3v2h-3zM338 794h3v2h-3zM340 795h3v2h-3zM342 796h3v2h-3zM344 797h3v2h-3z"/>
<path fill="#ffff00" d="M345 797h7v2h-7zM351 796h6v2h-6z"/>
<path fill="#ffff00" d="M355 796h3v2h-3zM357 795h3v2h-3zM359 794h3v2h-3zM361 793h3v2h-3zM363 792h3v2h-3zM365 791h2v2h-2z"/>
<path fill="#ffff00" d="M365 791h2v2h-2zM366 790h2v2h-2zM367 789h2v2h-2zM368 788h2v2h-2zM369 787h3v2h-3zM371 786h2v2h-2zM372 785h2v2h-2zM373 784h2v2h-2zM374 783h2v2h-2zM375 782h2v2h-2z"/>
<path fill="#ffff00" d="M375 782h2v2h-2zM376 781h2v2h-2zM377 780h2v2h-2zM378 779h2v2h-2zM379 778h2v2h-2zM380 776h2v3h-2zM381 775h2v2h-2zM382 774h2v2h-2zM383 773h2v2h-2zM384 772h2v2h-2zM385 771h2v2h-2z"/>
<path fill="#ffff00" d="M385 771h2v2h-2zM386 770h2v2h-2zM387 769h2v2h-2zM388 767h2v3h-2zM389 766h2v2h-2zM390 765h2v2h-2zM391 764h2v2h-2zM392 763h2v2h-2zM393 761h2v3h-2zM394 760h2v2h-2zM395 759h2v2h-2z"/>
<path fill="#ffff00" d="M395 759h2v2h-2zM396 758h2v2h-2zM397 757h3v2h-3zM399 756h2v2h-2zM400 755h2v2h-2zM401 754h2v2h-2zM402 753h3v2h-3zM404 752h2v2h-2zM405 751h2v2h-2z"/>
<path fill="#ffff00" d="M405 751h2v2h-2zM406 750h2v2h-2zM407 749h2v2h-2zM408 747h2v3h-2zM409 746h2v2h-2zM410 745h2v2h-2zM411 744h2v2h-2zM412 743h2v2h-2zM413 741h2v3h-2zM414 740h2v2h-2zM415 739h2v2h-2z"/>
<path fill="#ffff00" d="M415 739h2v2h-2zM416 738h2v2h-2zM417 737h2v2h-2zM418 735h2v3h-2zM419 734h2v2h-2zM420 733h2v2h-2zM421 732h2v2h-2zM422 731h2v2h-2zM423 729h2v3h-2zM424 728h2v2h-2zM425 727h2v2h-2z"/>
<path fill="#ffff00" d="M425 727h2v2h-2zM426 726h2v2h-2zM427 725h2v2h-2zM428 723h2v3h-2zM429 722h2v2h-2zM430 721h2v2h-2zM431 720h2v2h-2zM432 719h2v2h-2zM433 717h2v3h-2zM434 716h2v2h-2zM435 715h2v2h-2z"/>
<path fill="#ffff00" d="M435 715h2v2h-2zM436 714h2v2h-2zM437 713h2v2h-2zM438 712h2v2h-2zM439 711h2v2h-2zM440 710h2v2h-2zM441 709h2v2h-2zM442 708h2v2h-2zM443 707h2v2h-2zM444 706h2v2h-2zM445 705h2v2h-2z"/>
<path fill="#ffff00" d="M445 705h2v2h-2zM446 704h2v2h-2zM447 703h2v2h-2zM448 701h2v3h-2zM449 700h2v2h-2zM450 699h2v2h-2zM451 698h2v2h-2zM452 697h2v2h-2zM453 695h2v3h-2zM454 694h2v2h-2zM455 693h2v2h-2z"/>
<path fill="#ffff00" d="M455 693h2v2h-2zM456 692h2v2h-2zM457 690h2v3h-2zM458 689h2v2h-2zM459 688h2v2h-2zM460 686h2v3h-2zM461 685h2v2h-2zM462 684h2v2h-2zM463 682h2v3h-2zM464 681h2v2h-2zM465 680h2v2h-2z"/>
<path fill="#ffff00" d="M465 680h2v2h-2zM466 678h2v3h-2zM467 677h2v2h-2zM468 676h2v2h-2zM469 674h2v3h-2zM470 673h2v2h-2zM471 671h2v3h-2zM472 670h2v2h-2zM473 669h2v2h-2zM474 667h2v3h-2zM475 666h2v2h-2z"/>
<path fill="#ffff00" d="M475 666h2v2h-2zM476 665h2v2h-2zM477 663h2v3h-2zM478 662h2v2h-2zM479 661h2v2h-2zM480 659h2v3h-2zM481 658h2v2h-2zM482 657h2v2h-2zM483 655h2v3h-2zM484 654h2v2h-2zM485 653h2v2h-2z"/>
<path fill="#ffff00" d="M485 653h2v2h-2zM486 652h2v2h-2zM487 651h2v2h-2zM488 649h2v3h-2zM489 648h2v2h-2zM490 647h2v2h-2zM491 646h2v2h-2zM492 645h2v2h-2zM493 643h2v3h-2zM494 642h2v2h-2zM495 641h2v2h-2z"/>
<path fill="#ffff00" d="M495 641h2v2h-2zM496 639h2v3h-2zM497 638h2v2h-2zM498 637h2v2h-2zM499 635h2v3h-2zM500 634h2v2h-2zM501 632h2v3h-2zM502 631h2v2h-2zM503 630h2v2h-2zM504 628h2v3h-2zM505 627h2v2h-2z"/>
<path fill="#ffff00" d="M505 627h2v2h-2zM506 626h2v2h-2zM507 625h2v2h-2zM508 624h2v2h-2zM509 623h2v2h-2zM510 622h2v2h-2zM511 621h2v2h-2zM512 620h2v2h-2zM513 619h2v2h-2zM514 618h2v2h-2zM515 617h2v2h-2z"/>
<path fill="#ffff00" d="M515 617h2v2h-2zM516 616h2v2h-2zM517 615h2v2h-2zM518 614h2v2h-2zM519 613h3v2h-3zM521 612h2v2h-2zM522 611h2v2h-2zM523 610h2v2h-2zM524 609h2v2h-2zM525 608h2v2h-2z"/>
<path fill="#ffff00" d="M525 608h2v2h-2zM526 607h2v2h-2zM527 606h2v2h-2zM528 605h2v2h-2zM529 604h3v2h-3zM531 603h2v2h-2zM532 602h2v2h-2zM533 601h2v2h-2zM534 600h2v2h-2zM535 599h2v2h-2z"/>
<path fill="#ffff00" d="M535 599h2v2h-2zM536 598h2v2h-2zM537 597h2v2h-2zM538 596h2v2h-2zM539 595h2v2h-2zM540 593h2v3h-2zM541 592h2v2h-2zM542 591h2v2h-2zM543 590h2v2h-2zM544 589h2v2h-2zM545 588h2v2h-2z"/>
<path fill="#ffff00" d="M545 588h2v2h-2zM546 587h3v2h-3zM548 586h2v2h-2zM549 585h3v2h-3zM551 584h2v2h-2zM552 583h2v2h-2zM553 582h3v2h-3zM555 581h2v2h-2z"/>
<path fill="#ffff00" d="M555 581h4v2h-4zM558 580h6v2h-6zM563 579h4v2h-4z"/>
<path fill="#ffff00" d="M565 579h3v2h-3zM567 578h3v2h-3zM569 577h4v2h-4zM572 576h3v2h-3zM574 575h3v2h-3z"/>
<path fill="#ffff00" d="M575 575h12v2h-12z"/>
<path fill="#ffff00" d="M585 575h7v2h-7zM591 574h6v2h-6z"/>
<path fill="#ff0000" d="M595 574h7v2h-7zM601 573h6v2h-6z"/>
<path fill="#ff0000" d="M605 573h3v2h-3zM607 572h3v2h-3zM609 571h4v2h-4zM612 570h3v2h-3zM614 569h3v2h-3z"/>
<path fill="#ff0000" d="M615 569h2v2h-2zM616 568h2v2h-2zM617 567h2v2h-2zM618 566h2v2h-2zM619 565h2v2h-2zM620 564h2v2h-2zM621 563h2v2h-2zM622 562h2v2h-2zM623 561h2v2h-2zM624 560h2v2h-2zM625 559h2v2h-2z"/>
<path fill="#ff0000" d="M625 559h2v2h-2zM626 558h2v2h-2zM627 557h2v2h-2zM628 556h2v2h-2zM629 555h2v2h-2zM630 553h2v3h-2zM631 552h2v2h-2zM632 551h2v2h-2zM633 550h2v2h-2zM634 549h2v2h-2zM635 548h2v2h-2z"/>
<path fill="#ff0000" d="M635 548h2v2h-2zM636 547h2v2h-2zM637 546h2v2h-2zM638 545h2v2h-2zM639 544h3v2h-3zM641 543h2v2h-2zM642 542h2v2h-2zM643 541h2v2h-2zM644 540h2v2h-2zM645 539h2v2h-2z"/>
<path fill="#ff0000" d="M645 539h3v2h-3zM647 538h3v2h-3zM649 537h4v2h-4zM652 536h3v2h-3zM654 535h3v2h-3z"/>
<path fill="#ff0000" d="M655 535h4v2h-4zM658 534h6v2h-6zM663 533h4v2h-4z"/>
<path fill="#ff0000" d="M665 533h7v2h-7zM671 532h6v2h-6z"/>
<rect x="4" y="693" width="3" height="3" fill="#ffff00"/>
<rect x="14" y="683" width="3" height="3" fill="#00ff00"/>
<rect x="24" y="670" width="3" height="3" fill="#00ff00"/>
<rect x="34" y="684" width="3" height="3" fill="#ffff00"/>
<rect x="44" y="693" width="3" height="3" fill="#ff0000"/>
<rect x="54" y="695" width="3" height="3" fill="#ff0000"/>
<rect x="64" y="687" width="3" height="3" fill="#ffff00"/>
<rect x="74" y="676" width="3" height="3" fill="#00ff00"/>
<rect x="84" y="658" width="3" height="3" fill="#00ff00"/>
<rect x="94" y="626" width="3" height="3" fill="#00ff00"/>
<rect x="104" y="616" width="3" height="3" fill="#00ff00"/>
<rect x="114" y="609" width="3" height="3" fill="#00ff00"/>
<rect x="124" y="580" width="3" height="3" fill="#00ff00"/>
<rect x="134" y="567" width="3" height="3" fill="#00ff00"/>
<rect x="144" y="577" width="3" height="3" fill="#00ff00"/>
<rect x="154" y="589" width="3" height="3" fill="#ffff00"/>
<rect x="164" y="593" width="3" height="3" fill="#ff0000"/>
<rect x="174" y="607" width="3" height="3" fill="#ff0000"/>
<rect x="184" y="620" width="3" height="3" fill="#ff0000"/>
<rect x="194" y="629" width="3" height="3" fill="#ff0000"/>
<rect x="204" y="648" width="3" height="3" fill="#ff0000"/>
<rect x="214" y="675" width="3" height="3" fill="#ff0000"/>
<rect x="224" y="691" width="3" height="3" fill="#ff0000"/>
<rect x="234" y="701" width="3" height="3" fill="#ff0000"/>
<rect x="244" y="723" width="3" height="3" fill="#ff0000"/>
<rect x="254" y="737" width="3" height="3" fill="#ff0000"/>
<rect x="264" y="754" width="3" height="3" fill="#ff0000"/>
<rect x="274" y="792" width="3" height="3" fill="#ff0000"/>
<rect x="284" y="800" width="3" height="3" fill="#ff0000"/>
<rect x="294" y="804" width="3" height="3" fill="#ff0000"/>
<rect x="304" y="817" width="3" height="3" fill="#ff0000"/>
<rect x="314" y="815" width="3" height="3" fill="#ff0000"/>
<rect x="324" y="820" width="3" height="3" fill="#ff0000"/>
<rect x="334" y="831" width="3" height="3" fill="#ff0000"/>
<rect x="344" y="820" width="3" height="3" fill="#ffff00"/>
<rect x="354" y="794" width="3" height="3" fill="#00ff00"/>
<rect x="364" y="769" width="3" height="3" fill="#00ff00"/>
<rect x="374" y="744" width="3" height="3" fill="#00ff00"/>
<rect x="384" y="731" width="3" height="3" fill="#00ff00"/>
<rect x="394" y="718" width="3" height="3" fill="#00ff00"/>
<rect x="404" y="718" width="3" height="3" fill="#00ff00"/>
<rect x="414" y="693" width="3" height="3" fill="#00ff00"/>
<rect x="424" y="680" width="3" height="3" fill="#00ff00"/>
<rect x="434" y="676" width="3" height="3" fill="#00ff00"/>
<rect x="444" y="664" width="3" height="3" fill="#00ff00"/>
<rect x="454" y="645" width="3" height="3" fill="#00ff00"/>
<rect x="464" y="627" width="3" height="3" fill="#00ff00"/>
<rect x="474" y="607" width="3" height="3" fill="#00ff00"/>
<rect x="484" y="602" width="3" height="3" fill="#00ff00"/>
<rect x="494" y="589" width="3" height="3" fill="#00ff00"/>
<rect x="504" y="574" width="3" height="3" fill="#00ff00"/>
<rect x="514" y="582" width="3" height="3" fill="#00ff00"/>
<rect x="524" y="572" width="3" height="3" fill="#00ff00"/>
<rect x="534" y="559" width="3" height="3" fill="#00ff00"/>
<rect x="544" y="552" width="3" height="3" fill="#00ff00"/>
<rect x="554" y="550" width="3" height="3" fill="#00ff00"/>
<rect x="564" y="563" width="3" height="3" fill="#ff0000"/>
<rect x="574" y="566" width="3" height="3" fill="#ff0000"/>
<rect x="584" y="571" width="3" height="3" fill="#ff0000"/>
<rect x="594" y="574" width="3" height="3" fill="#ff0000"/>
<rect x="604" y="569" width="3" height="3" fill="#ffff00"/>
<rect x="614" y="555" width="3" height="3" fill="#00ff00"/>
<rect x="624" y="519" width="3" height="3" fill="#00ff00"/>
<rect x="634" y="506" width="3" height="3" fill="#00ff00"/>
<rect x="644" y="502" width="3" height="3" fill="#00ff00"/>
<rect x="654" y="518" width="3" height="3" fill="#ffff00"/>
<rect x="664" y="527" width="3" height="3" fill="#ff0000"/>
<rect x="674" y="530" width="3" height="3" fill="#ff0000"/>
<path fill="#00ff00" d="M5 694h1v1h-1zM6 693h1v1h-1zM7 692h1v1h-1zM8 691h1v1h-1zM9 690h1v1h-1zM10 689h1v1h-1zM11 688h1v1h-1zM12 687h1v1h-1zM13 686h1v1h-1zM14 685h1v1h-1zM15 684h1v1h-1z"/>
<path fill="#00ff00" d="M15 684h1v1h-1zM16 683h1v1h-1zM17 681h1v2h-1zM18 680h1v1h-1zM19 679h1v1h-1zM20 677h1v2h-1zM21 676h1v1h-1zM22 675h1v1h-1zM23 673h1v2h-1zM24 672h1v1h-1zM25 671h1v1h-1z"/>
<path fill="#ffff00" d="M25 671h1v1h-1zM26 672h1v2h-1zM27 674h1v1h-1zM28 675h1v1h-1zM29 676h1v2h-1zM30 678h1v1h-1zM31 679h1v2h-1zM32 681h1v1h-1zM33 682h1v1h-1zM34 683h1v2h-1zM35 685h1v1h-1z"/>
<path fill="#ff0000" d="M35 685h1v1h-1zM36 686h1v1h-1zM37 687h1v1h-1zM38 688h1v1h-1zM39 689h1v1h-1zM40 690h2v1h-2zM42 691h1v1h-1zM43 692h1v1h-1zM44 693h1v1h-1zM45 694h1v1h-1z"/>
<path fill="#ff0000" d="M45 694h3v1h-3zM48 695h5v1h-5zM53 696h3v1h-3z"/>
<path fill="#ffff00" d="M55 696h1v1h-1zM56 695h1v1h-1zM57 694h2v1h-2zM59 693h1v1h-1zM60 692h1v1h-1zM61 691h1v1h-1zM62 690h2v1h-2zM64 689h1v1h-1zM65 688h1v1h-1z"/>
<path fill="#00ff00" d="M65 688h1v1h-1zM66 687h1v1h-1zM67 686h1v1h-1zM68 685h1v1h-1zM69 684h1v1h-1zM70 682h1v2h-1zM71 681h1v1h-1zM72 680h1v1h-1zM73 679h1v1h-1zM74 678h1v1h-1zM75 677h1v1h-1z"/>
<path fill="#00ff00" d="M75 677h1v1h-1zM76 675h1v2h-1zM77 673h1v2h-1zM78 671h1v2h-1zM79 669h1v2h-1zM80 668h1v1h-1zM81 666h1v2h-1zM82 664h1v2h-1zM83 662h1v2h-1zM84 660h1v2h-1zM85 659h1v1h-1z"/>
<path fill="#00ff00" d="M85 658h1v2h-1zM86 655h1v3h-1zM87 652h1v3h-1zM88 648h1v4h-1zM89 645h1v3h-1zM90 642h1v3h-1zM91 639h1v3h-1zM92 636h1v3h-1zM93 632h1v4h-1zM94 629h1v3h-1zM95 627h1v2h-1z"/>
<path fill="#00ff00" d="M95 627h1v1h-1zM96 626h1v1h-1zM97 625h1v1h-1zM98 624h1v1h-1zM99 623h1v1h-1zM100 622h1v1h-1zM101 621h1v1h-1zM102 620h1v1h-1zM103 619h1v1h-1zM104 618h1v1h-1zM105 617h1v1h-1z"/>
<path fill="#00ff00" d="M105 617h1v1h-1zM106 616h2v1h-2zM108 615h1v1h-1zM109 614h2v1h-2zM111 613h1v1h-1zM112 612h1v1h-1zM113 611h2v1h-2zM115 610h1v1h-1z"/>
<path fill="#00ff00" d="M115 609h1v2h-1zM116 606h1v3h-1zM117 603h1v3h-1zM118 600h1v3h-1zM119 597h1v3h-1zM120 595h1v2h-1zM121 592h1v3h-1zM122 589h1v3h-1zM123 586h1v3h-1zM124 583h1v3h-1zM125 581h1v2h-1z"/>
<path fill="#00ff00" d="M125 581h1v1h-1zM126 580h1v1h-1zM127 578h1v2h-1zM128 577h1v1h-1zM129 576h1v1h-1zM130 574h1v2h-1zM131 573h1v1h-1zM132 572h1v1h-1zM133 570h1v2h-1zM134 569h1v1h-1zM135 568h1v1h-1z"/>
<path fill="#00ff00" d="M135 568h1v1h-1zM136 569h1v1h-1zM137 570h1v1h-1zM138 571h1v1h-1zM139 572h1v1h-1zM140 573h1v1h-1zM141 574h1v1h-1zM142 575h1v1h-1zM143 576h1v1h-1zM144 577h1v1h-1zM145 578h1v1h-1z"/>
<path fill="#ffff00" d="M145 578h1v1h-1zM146 579h1v1h-1zM147 580h1v1h-1zM148 581h1v2h-1zM149 583h1v1h-1zM150 584h1v1h-1zM151 585h1v1h-1zM152 586h1v1h-1zM153 587h1v2h-1zM154 589h1v1h-1zM155 590h1v1h-1z"/>
<path fill="#ff0000" d="M155 590h2v1h-2zM157 591h2v1h-2zM159 592h3v1h-3zM162 593h2v1h-2zM164 594h2v1h-2z"/>
<path fill="#ff0000" d="M165 594h1v1h-1zM166 595h1v2h-1zM167 597h1v1h-1zM168 598h1v1h-1zM169 599h1v2h-1zM170 601h1v1h-1zM171 602h1v2h-1zM172 604h1v1h-1zM173 605h1v1h-1zM174 606h1v2h-1zM175 608h1v1h-1z"/>
<path fill="#ff0000" d="M175 608h1v1h-1zM176 609h1v1h-1zM177 610h1v2h-1zM178 612h1v1h-1zM179 613h1v1h-1zM180 614h1v2h-1zM181 616h1v1h-1zM182 617h1v1h-1zM183 618h1v2h-1zM184 620h1v1h-1zM185 621h1v1h-1z"/>
<path fill="#ff0000" d="M185 621h1v1h-1zM186 622h1v1h-1zM187 623h1v1h-1zM188 624h1v1h-1zM189 625h1v1h-1zM190 626h2v1h-2zM192 627h1v1h-1zM193 628h1v1h-1zM194 629h1v1h-1zM195 630h1v1h-1z"/>
<path fill="#ff0000" d="M195 630h1v1h-1zM196 631h1v2h-1zM197 633h1v2h-1zM198 635h1v2h-1zM199 637h1v2h-1zM200 639h1v2h-1zM201 641h1v2h-1zM202 643h1v2h-1zM203 645h1v2h-1zM204 647h1v2h-1zM205 649h1v1h-1z"/>
<path fill="#ff0000" d="M205 649h1v2h-1zM206 651h1v3h-1zM207 654h1v2h-1zM208 656h1v3h-1zM209 659h1v3h-1zM210 662h1v2h-1zM211 664h1v3h-1zM212 667h1v3h-1zM213 670h1v2h-1zM214 672h1v3h-1zM215 675h1v2h-1z"/>
<path fill="#ff0000" d="M215 676h1v1h-1zM216 677h1v2h-1zM217 679h1v1h-1zM218 680h1v2h-1zM219 682h1v2h-1zM220 684h1v1h-1zM221 685h1v2h-1zM222 687h1v1h-1zM223 688h1v2h-1zM224 690h1v2h-1zM225 692h1v1h-1z"/>
<path fill="#ff0000" d="M225 692h1v1h-1zM226 693h1v1h-1zM227 694h1v1h-1zM228 695h1v1h-1zM229 696h1v1h-1zM230 697h1v1h-1zM231 698h1v1h-1zM232 699h1v1h-1zM233 700h1v1h-1zM234 701h1v1h-1zM235 702h1v1h-1z"/>
<path fill="#ff0000" d="M235 702h1v2h-1zM236 704h1v2h-1zM237 706h1v2h-1zM238 708h1v2h-1zM239 710h1v2h-1zM240 712h1v3h-1zM241 715h1v2h-1zM242 717h1v2h-1zM243 719h1v2h-1zM244 721h1v2h-1zM245 723h1v2h-1z"/>
<path fill="#ff0000" d="M245 724h1v1h-1zM246 725h1v2h-1zM247 727h1v1h-1zM248 728h1v1h-1zM249 729h1v2h-1zM250 731h1v1h-1zM251 732h1v2h-1zM252 734h1v1h-1zM253 735h1v1h-1zM254 736h1v2h-1zM255 738h1v1h-1z"/>
<path fill="#ff0000" d="M255 738h1v1h-1zM256 739h1v2h-1zM257 741h1v2h-1zM258 743h1v1h-1zM259 744h1v2h-1zM260 746h1v2h-1zM261 748h1v2h-1zM262 750h1v1h-1zM263 751h1v2h-1zM264 753h1v2h-1zM265 755h1v1h-1z"/>
<path fill="#ff0000" d="M265 755h1v2h-1zM266 757h1v4h-1zM267 761h1v4h-1zM268 765h1v4h-1zM269 769h1v4h-1zM270 773h1v3h-1zM271 776h1v4h-1zM272 780h1v4h-1zM273 784h1v4h-1zM274 788h1v4h-1zM275 792h1v2h-1z"/>
<path fill="#ff0000" d="M275 793h1v1h-1zM276 794h1v1h-1zM277 795h2v1h-2zM279 796h1v1h-1zM280 797h1v1h-1zM281 798h1v1h-1zM282 799h2v1h-2zM284 800h1v1h-1zM285 801h1v1h-1z"/>
<path fill="#ff0000" d="M285 801h2v1h-2zM287 802h2v1h-2zM289 803h3v1h-3zM292 804h2v1h-2zM294 805h2v1h-2z"/>
<path fill="#ff0000" d="M295 805h1v1h-1zM296 806h1v1h-1zM297 807h1v2h-1zM298 809h1v1h-1zM299 810h1v1h-1zM300 811h1v2h-1zM301 813h1v1h-1zM302 814h1v1h-1zM303 815h1v2h-1zM304 817h1v1h-1zM305 818h1v1h-1z"/>
<path fill="#ff0000" d="M305 818h3v1h-3zM308 817h5v1h-5zM313 816h3v1h-3z"/>
<path fill="#ff0000" d="M315 816h1v1h-1zM316 817h2v1h-2zM318 818h2v1h-2zM320 819h2v1h-2zM322 820h2v1h-2zM324 821h2v1h-2z"/>
<path fill="#ff0000" d="M325 821h1v1h-1zM326 822h1v1h-1zM327 823h1v1h-1zM328 824h1v1h-1zM329 825h1v1h-1zM330 826h1v2h-1zM331 828h1v1h-1zM332 829h1v1h-1zM333 830h1v1h-1zM334 831h1v1h-1zM335 832h1v1h-1z"/>
<path fill="#ffff00" d="M335 832h1v1h-1zM336 831h1v1h-1zM337 830h1v1h-1zM338 829h1v1h-1zM339 828h1v1h-1zM340 826h1v2h-1zM341 825h1v1h-1zM342 824h1v1h-1zM343 823h1v1h-1zM344 822h1v1h-1zM345 821h1v1h-1z"/>
<path fill="#00ff00" d="M345 820h1v2h-1zM346 818h1v2h-1zM347 815h1v3h-1zM348 812h1v3h-1zM349 810h1v2h-1zM350 807h1v3h-1zM351 805h1v2h-1zM352 802h1v3h-1zM353 799h1v3h-1zM354 797h1v2h-1zM355 795h1v2h-1z"/>
<path fill="#00ff00" d="M355 794h1v2h-1zM356 792h1v2h-1zM357 789h1v3h-1zM358 787h1v2h-1zM359 784h1v3h-1zM360 782h1v2h-1zM361 779h1v3h-1zM362 777h1v2h-1zM363 774h1v3h-1zM364 772h1v2h-1zM365 770h1v2h-1z"/>
<path fill="#00ff00" d="M365 769h1v2h-1zM366 767h1v2h-1zM367 764h1v3h-1zM368 762h1v2h-1zM369 759h1v3h-1zM370 757h1v2h-1zM371 754h1v3h-1zM372 752h1v2h-1zM373 749h1v3h-1zM374 747h1v2h-1zM375 745h1v2h-1z"/>
<path fill="#00ff00" d="M375 745h1v1h-1zM376 744h1v1h-1zM377 742h1v2h-1zM378 741h1v1h-1zM379 740h1v1h-1zM380 738h1v2h-1zM381 737h1v1h-1zM382 736h1v1h-1zM383 734h1v2h-1zM384 733h1v1h-1zM385 732h1v1h-1z"/>
<path fill="#00ff00" d="M385 732h1v1h-1zM386 731h1v1h-1zM387 729h1v2h-1zM388 728h1v1h-1zM389 727h1v1h-1zM390 725h1v2h-1zM391 724h1v1h-1zM392 723h1v1h-1zM393 721h1v2h-1zM394 720h1v1h-1zM395 719h1v1h-1z"/>
<path fill="#00ff00" d="M395 719h11v1h-11z"/>
<path fill="#00ff00" d="M405 718h1v2h-1zM406 716h1v2h-1zM407 713h1v3h-1zM408 711h1v2h-1zM409 708h1v3h-1zM410 706h1v2h-1zM411 703h1v3h-1zM412 701h1v2h-1zM413 698h1v3h-1zM414 696h1v2h-1zM415 694h1v2h-1z"/>
<path fill="#00ff00" d="M415 694h1v1h-1zM416 693h1v1h-1zM417 691h1v2h-1zM418 690h1v1h-1zM419 689h1v1h-1zM420 687h1v2h-1zM421 686h1v1h-1zM422 685h1v1h-1zM423 683h1v2h-1zM424 682h1v1h-1zM425 681h1v1h-1z"/>
<path fill="#00ff00" d="M425 681h2v1h-2zM427 680h2v1h-2zM429 679h3v1h-3zM432 678h2v1h-2zM434 677h2v1h-2z"/>
<path fill="#00ff00" d="M435 677h1v1h-1zM436 676h1v1h-1zM437 675h1v1h-1zM438 673h1v2h-1zM439 672h1v1h-1zM440 671h1v1h-1zM441 670h1v1h-1zM442 669h1v1h-1zM443 667h1v2h-1zM444 666h1v1h-1zM445 665h1v1h-1z"/>
<path fill="#00ff00" d="M445 665h1v1h-1zM446 663h1v2h-1zM447 661h1v2h-1zM448 659h1v2h-1zM449 657h1v2h-1zM450 655h1v2h-1zM451 653h1v2h-1zM452 651h1v2h-1zM453 649h1v2h-1zM454 647h1v2h-1zM455 646h1v1h-1z"/>
<path fill="#00ff00" d="M455 646h1v1h-1zM456 644h1v2h-1zM457 642h1v2h-1zM458 640h1v2h-1zM459 638h1v2h-1zM460 637h1v1h-1zM461 635h1v2h-1zM462 633h1v2h-1zM463 631h1v2h-1zM464 629h1v2h-1zM465 628h1v1h-1z"/>
<path fill="#00ff00" d="M465 628h1v1h-1zM466 626h1v2h-1zM467 624h1v2h-1zM468 622h1v2h-1zM469 620h1v2h-1zM470 618h1v2h-1zM471 616h1v2h-1zM472 614h1v2h-1zM473 612h1v2h-1zM474 610h1v2h-1zM475 608h1v2h-1z"/>
<path fill="#00ff00" d="M475 608h2v1h-2zM477 607h2v1h-2zM479 606h2v1h-2zM481 605h2v1h-2zM483 604h2v1h-2zM485 603h1v1h-1z"/>
<path fill="#00ff00" d="M485 603h1v1h-1zM486 602h1v1h-1zM487 600h1v2h-1zM488 599h1v1h-1zM489 598h1v1h-1zM490 596h1v2h-1zM491 595h1v1h-1zM492 594h1v1h-1zM493 592h1v2h-1zM494 591h1v1h-1zM495 590h1v1h-1z"/>
<path fill="#00ff00" d="M495 590h1v1h-1zM496 588h1v2h-1zM497 587h1v1h-1zM498 585h1v2h-1zM499 584h1v1h-1zM500 582h1v2h-1zM501 581h1v1h-1zM502 579h1v2h-1zM503 578h1v1h-1zM504 576h1v2h-1zM505 575h1v1h-1z"/>
<path fill="#00ff00" d="M505 575h1v1h-1zM506 576h1v1h-1zM507 577h2v1h-2zM509 578h1v1h-1zM510 579h1v1h-1zM511 580h1v1h-1zM512 581h2v1h-2zM514 582h1v1h-1zM515 583h1v1h-1z"/>
<path fill="#00ff00" d="M515 583h1v1h-1zM516 582h1v1h-1zM517 581h1v1h-1zM518 580h1v1h-1zM519 579h1v1h-1zM520 578h1v1h-1zM521 577h1v1h-1zM522 576h1v1h-1zM523 575h1v1h-1zM524 574h1v1h-1zM525 573h1v1h-1z"/>
<path fill="#00ff00" d="M525 573h1v1h-1zM526 572h1v1h-1zM527 570h1v2h-1zM528 569h1v1h-1zM529 568h1v1h-1zM530 566h1v2h-1zM531 565h1v1h-1zM532 564h1v1h-1zM533 562h1v2h-1zM534 561h1v1h-1zM535 560h1v1h-1z"/>
<path fill="#00ff00" d="M535 560h1v1h-1zM536 559h2v1h-2zM538 558h1v1h-1zM539 557h2v1h-2zM541 556h1v1h-1zM542 555h1v1h-1zM543 554h2v1h-2zM545 553h1v1h-1z"/>
<path fill="#00ff00" d="M545 553h3v1h-3zM548 552h5v1h-5zM553 551h3v1h-3z"/>
<path fill="#ff0000" d="M555 551h1v1h-1zM556 552h1v1h-1zM557 553h1v2h-1zM558 555h1v1h-1zM559 556h1v1h-1zM560 557h1v2h-1zM561 559h1v1h-1zM562 560h1v1h-1zM563 561h1v2h-1zM564 563h1v1h-1zM565 564h1v1h-1z"/>
<path fill="#ff0000" d="M565 564h2v1h-2zM567 565h3v1h-3zM570 566h4v1h-4zM574 567h2v1h-2z"/>
<path fill="#ff0000" d="M575 567h1v1h-1zM576 568h2v1h-2zM578 569h2v1h-2zM580 570h2v1h-2zM582 571h2v1h-2zM584 572h2v1h-2z"/>
<path fill="#ff0000" d="M585 572h2v1h-2zM587 573h3v1h-3zM590 574h4v1h-4zM594 575h2v1h-2z"/>
<path fill="#ffff00" d="M595 575h2v1h-2zM597 574h2v1h-2zM599 573h2v1h-2zM601 572h2v1h-2zM603 571h2v1h-2zM605 570h1v1h-1z"/>
<path fill="#00ff00" d="M605 570h1v1h-1zM606 568h1v2h-1zM607 567h1v1h-1zM608 566h1v1h-1zM609 564h1v2h-1zM610 563h1v1h-1zM611 561h1v2h-1zM612 560h1v1h-1zM613 559h1v1h-1zM614 557h1v2h-1zM615 556h1v1h-1z"/>
<path fill="#00ff00" d="M615 555h1v2h-1zM616 551h1v4h-1zM617 548h1v3h-1zM618 544h1v4h-1zM619 540h1v4h-1zM620 537h1v3h-1zM621 533h1v4h-1zM622 530h1v3h-1zM623 526h1v4h-1zM624 522h1v4h-1zM625 520h1v2h-1z"/>
<path fill="#00ff00" d="M625 520h1v1h-1zM626 519h1v1h-1zM627 517h1v2h-1zM628 516h1v1h-1zM629 515h1v1h-1zM630 513h1v2h-1zM631 512h1v1h-1zM632 511h1v1h-1zM633 509h1v2h-1zM634 508h1v1h-1zM635 507h1v1h-1z"/>
<path fill="#00ff00" d="M635 507h2v1h-2zM637 506h2v1h-2zM639 505h3v1h-3zM642 504h2v1h-2zM644 503h2v1h-2z"/>
<path fill="#ffff00" d="M645 503h1v1h-1zM646 504h1v2h-1zM647 506h1v1h-1zM648 507h1v2h-1zM649 509h1v2h-1zM650 511h1v1h-1zM651 512h1v2h-1zM652 514h1v1h-1zM653 515h1v2h-1zM654 517h1v2h-1zM655 519h1v1h-1z"/>
<path fill="#ff0000" d="M655 519h1v1h-1zM656 520h1v1h-1zM657 521h1v1h-1zM658 522h1v1h-1zM659 523h1v1h-1zM660 524h2v1h-2zM662 525h1v1h-1zM663 526h1v1h-1zM664 527h1v1h-1zM665 528h1v1h-1z"/>
<path fill="#ff0000" d="M665 528h2v1h-2zM667 529h3v1h-3zM670 530h4v1h-4zM674 531h2v1h-2z"/>
<polygon points="1186,33.5 1193,26 1246,26 1246,41 1193,41" fill="#009000"/>
<rect x="1193" y="41" width="53" height="15" fill="#0000ff"/>
<rect x="1193" y="177" width="53" height="15" fill="#32cd32"/>
<polygon points="1186,531.5 1193,524 1246,524 1246,539 1193,539" fill="#ff0000"/>
<rect x="1193" y="539" width="53" height="15" fill="#ff0000"/>
<rect x="1193" y="708" width="53" height="15" fill="#ffc0cb"/>
</svg>
<div class="l" style="top:2px"><span style="color:#ffffff"><span style="letter-spacing:-0.094px">HNXINDEX</span></span><span style="color:#ffff00"><span style="letter-spacing:-0.094px"> </span><span style="letter-spacing:-0.074px">•</span><span style="letter-spacing:-0.074px"> </span><span style="letter-spacing:-0.016px">14/06/2017</span></span><span style="color:#ffffff"><span style="letter-spacing:-0.016px"> </span><span style="letter-spacing:0.099px">•</span><span style="letter-spacing:0.099px"> </span><span style="letter-spacing:0.151px">Open=</span><span style="letter-spacing:0.151px"> </span><span style="letter-spacing:-0.050px">97.31</span><span style="letter-spacing:-0.050px"> </span><span style="letter-spacing:0.041px">•</span><span style="letter-spacing:0.041px"> </span><span style="letter-spacing:0.183px">High=</span><span style="letter-spacing:0.183px"> </span><span style="letter-spacing:0.066px">98.06</span><span style="letter-spacing:0.066px"> </span><span style="letter-spacing:-0.309px">•</span><span style="letter-spacing:-0.309px"> </span><span style="letter-spacing:0.153px">Low=</span><span style="letter-spacing:0.153px"> </span><span style="letter-spacing:0.133px">97.03</span><span style="letter-spacing:0.133px"> </span><span style="letter-spacing:-0.122px">•</span><span style="letter-spacing:-0.122px"> </span><span style="letter-spacing:0.218px">Close=</span><span style="letter-spacing:0.218px"> </span></span><span style="color:#00ff00"><span style="letter-spacing:-0.017px">97.89</span></span><span style="color:#ffffff"><span style="letter-spacing:-0.017px"> </span><span style="letter-spacing:0.078px">•</span><span style="letter-spacing:0.078px"> </span><span style="letter-spacing:0.245px">Change=</span><span style="letter-spacing:0.245px"> </span></span><span style="color:#00ff00"><span style="letter-spacing:-0.082px">0.59%</span></span><span style="color:#ffffff"><span style="letter-spacing:-0.082px"> </span><span style="letter-spacing:0.256px">•</span><span style="letter-spacing:0.256px"> </span><span style="letter-spacing:0.127px">Volume:</span><span style="letter-spacing:0.127px"> </span></span><span style="color:#ff0000"><span style="letter-spacing:0.036px">50,599,224.00</span></span><span style="color:#ffffff"><span style="letter-spacing:0.036px"> </span><span style="letter-spacing:-0.016px">•</span><span style="letter-spacing:-0.016px"> </span><span style="letter-spacing:0.081px">n_Vol:</span><span style="letter-spacing:0.081px"> </span></span><span style="color:#ff0000"><span style="letter-spacing:0.027px">0.99</span></span></div>
<div class="l" style="top:17px"><span style="color:#ff0000"><span style="letter-spacing:0.026px">-------------------------</span></span></div>
<div class="l" style="top:32px"><span style="color:#ff0000"><span style="letter-spacing:0.160px">Test_Trend:</span></span></div>
<div class="l" style="top:47px"><span style="color:#ffffff"><span style="letter-spacing:0.039px">RSI_Status:B:M_T_W_Tr_D|</span><span style="letter-spacing:0.039px"> </span><span style="letter-spacing:0.022px">TREND_Status:+++++|</span><span style="letter-spacing:0.022px"> </span><span style="letter-spacing:0.169px">Power:</span></span><span style="color:#ff0000">82</span><span style="color:#ffffff"><span style="letter-spacing:-0.169px">|</span><span style="letter-spacing:-0.169px"> </span><span style="letter-spacing:0.129px">Strong:******</span></span><span style="color:#d3d3d3"><span style="letter-spacing:0.013px">|</span><span style="letter-spacing:0.013px"> </span><span style="letter-spacing:0.157px">Zone_Status:Neutral</span></span></div>
<div class="l" style="top:62px"><span style="color:#d3d3d3"><span style="letter-spacing:0.032px">|</span><span style="letter-spacing:0.032px"> </span><span style="letter-spacing:0.066px">Daily_singal:Xu</span><span style="letter-spacing:0.066px"> </span><span style="letter-spacing:0.537px">Huong</span><span style="letter-spacing:0.537px"> </span><span style="letter-spacing:-0.236px">Tang</span></span></div>
<div class="l" style="top:77px"><span style="color:#ffffff"><span style="letter-spacing:-0.268px">•</span><span style="letter-spacing:-0.268px"> </span><span style="letter-spacing:-0.063px">Money_Daily:</span></span><span style="color:#00ff00"><span style="letter-spacing:0.158px">3,171,328.00</span></span><span style="color:#ffffff"><span style="letter-spacing:-0.060px">•</span><span style="letter-spacing:-0.060px"> </span>+-:</span><span style="color:#ff0000"><span style="letter-spacing:0.095px">-1,267,000.00</span></span></div>
<div class="l" style="top:92px"><span style="color:#ff0000"><span style="letter-spacing:0.026px">-------------------------</span></span></div>
<div class="l" style="top:107px"><span style="color:#ffffff"><span style="letter-spacing:-0.268px">•</span><span style="letter-spacing:-0.268px"> </span><span style="letter-spacing:-0.249px">MT1:</span></span><span style="color:#00ff00"><span style="letter-spacing:0.105px">97.51</span></span></div>
<div class="l" style="top:122px"><span style="color:#ffffff"><span style="letter-spacing:-0.268px">•</span><span style="letter-spacing:-0.268px"> </span><span style="letter-spacing:-0.015px">Value:</span></span><span style="color:#00ff00"><span style="letter-spacing:0.109px">93.77</span></span></div>
<div class="l" style="top:137px"><span style="color:#ffffff"><span style="letter-spacing:0.048px">|</span><span style="letter-spacing:0.048px"> </span><span style="letter-spacing:0.095px">Value_Status:Đinh</span><span style="letter-spacing:0.095px"> </span><span style="letter-spacing:0.332px">Gia</span><span style="letter-spacing:0.332px"> </span><span style="letter-spacing:-0.117px">Tang</span><span style="letter-spacing:-0.117px"> </span><span style="letter-spacing:-0.025px">Truong.</span><span style="letter-spacing:-0.025px"> </span><span style="letter-spacing:0.338px">Đâu</span><span style="letter-spacing:0.338px"> </span><span style="letter-spacing:-0.248px">tu,</span><span style="letter-spacing:-0.248px"> </span><span style="letter-spacing:0.129px">nam</span><span style="letter-spacing:0.129px"> </span><span style="letter-spacing:0.237px">giu</span><span style="letter-spacing:0.237px"> </span><span style="letter-spacing:0.381px">cho</span><span style="letter-spacing:0.381px"> </span><span style="letter-spacing:-0.040px">dên</span><span style="letter-spacing:-0.040px"> </span><span style="letter-spacing:-0.087px">khi</span><span style="letter-spacing:-0.087px"> </span><span style="letter-spacing:0.313px">Đinh</span><span style="letter-spacing:0.313px"> </span><span style="letter-spacing:-0.118px">Gia</span><span style="letter-spacing:-0.118px"> </span><span style="letter-spacing:-0.105px">Thay</span><span style="letter-spacing:-0.105px"> </span><span style="letter-spacing:0.068px">Đôi</span><span style="letter-spacing:0.068px"> </span><span style="letter-spacing:0.051px">Trang</span><span style="letter-spacing:0.051px"> </span><span style="letter-spacing:0.148px">thai</span></span></div>
<div class="l" style="top:152px"><span style="color:#ffffff"><span style="letter-spacing:0.390px">|</span><span style="letter-spacing:0.390px"> </span><span style="letter-spacing:0.105px">Trend_Status:Ngan</span><span style="letter-spacing:0.105px"> </span><span style="letter-spacing:-0.233px">Han</span><span style="letter-spacing:-0.233px"> </span><span style="letter-spacing:0.063px">Tang</span><span style="letter-spacing:0.063px"> </span><span style="letter-spacing:0.287px">Truong.</span><span style="letter-spacing:0.287px"> </span><span style="letter-spacing:0.138px">Đâu</span><span style="letter-spacing:0.138px"> </span><span style="letter-spacing:-0.148px">tu,</span><span style="letter-spacing:-0.148px"> </span><span style="letter-spacing:0.229px">nam</span><span style="letter-spacing:0.229px"> </span><span style="letter-spacing:0.043px">giu</span><span style="letter-spacing:0.043px"> </span><span style="letter-spacing:0.046px">Ngan</span><span style="letter-spacing:0.046px"> </span><span style="letter-spacing:0.317px">han</span><span style="letter-spacing:0.317px"> </span><span style="letter-spacing:0.195px">Cho</span><span style="letter-spacing:0.195px"> </span><span style="letter-spacing:0.062px">Đên</span><span style="letter-spacing:0.062px"> </span><span style="letter-spacing:-0.091px">Khi</span><span style="letter-spacing:-0.091px"> </span>Thay <span style="letter-spacing:0.168px">Đôi</span><span style="letter-spacing:0.168px"> </span><span style="letter-spacing:-0.342px">Xu</span><span style="letter-spacing:-0.342px"> </span><span style="letter-spacing:0.424px">Huong</span></span></div>
<div class="l" style="top:167px"><span style="color:#ffffff"><span style="letter-spacing:-0.268px">•</span><span style="letter-spacing:-0.268px"> </span><span style="letter-spacing:-0.089px">Over_Value:</span></span><span style="color:#00ff00"><span style="letter-spacing:0.263px">4.39</span></span></div>
<div class="l" style="top:182px"><span style="color:#ffffff"><span style="letter-spacing:-0.268px">•</span><span style="letter-spacing:-0.268px"> </span><span style="letter-spacing:0.071px">Short_Value:</span></span><span style="color:#00ff00"><span style="letter-spacing:0.084px">96.67</span></span></div>
<div class="l" style="top:197px"><span style="color:#ffffff"><span style="letter-spacing:-0.268px">•</span><span style="letter-spacing:-0.268px"> </span><span style="letter-spacing:0.072px">N_Taget:</span></span><span style="color:#00ff00"><span style="letter-spacing:0.200px">97.79</span></span></div>
<div class="l" style="top:212px"><span style="color:#ffffff"><span style="letter-spacing:-0.268px">•</span><span style="letter-spacing:-0.268px"> </span><span style="letter-spacing:-0.112px">Over_Taget:</span></span><span style="color:#00ff00"><span style="letter-spacing:0.262px">-0.09</span></span></div>
<div class="l" style="top:227px"><span style="color:#ffffff"><span style="letter-spacing:-0.268px">•</span><span style="letter-spacing:-0.268px"> </span><span style="letter-spacing:0.072px">Short_Taget:</span></span><span style="color:#ff0000"><span style="letter-spacing:0.209px">97.17</span></span></div>
<div class="l" style="top:242px"><span style="color:#ffffff"><span style="letter-spacing:-0.268px">•</span><span style="letter-spacing:-0.268px"> </span><span style="letter-spacing:0.134px">H7_Taget:</span></span><span style="color:#ff0000"><span style="letter-spacing:0.334px">98.02</span></span></div>
<div class="l" style="top:257px"><span style="color:#ffffff"><span style="letter-spacing:-0.268px">•</span><span style="letter-spacing:-0.268px"> </span><span style="letter-spacing:-0.020px">Taget-Value:</span></span><span style="color:#ff0000"><span style="letter-spacing:0.192px">-3.31</span></span></div>
<div class="l" style="top:272px"><span style="color:#ffffff"><span style="letter-spacing:-0.268px">•</span><span style="letter-spacing:-0.268px"> </span><span style="letter-spacing:-0.605px">MTM:</span></span><span style="color:#ff0000"><span style="letter-spacing:0.325px">94.59</span></span></div>
<div class="l" style="top:287px"><span style="color:#ffffff"><span style="letter-spacing:-0.268px">•</span><span style="letter-spacing:-0.268px"> </span><span style="letter-spacing:-0.439px">MTQ:</span></span><span style="color:#ff0000"><span style="letter-spacing:0.080px">92.11</span></span></div>
<div class="l" style="top:302px"><span style="color:#ffffff"><span style="letter-spacing:-0.268px">•</span><span style="letter-spacing:-0.268px"> </span><span style="letter-spacing:-0.671px">MTY:</span></span><span style="color:#ff0000"><span style="letter-spacing:0.336px">88.84</span></span></div>
<div class="l" style="top:482px"><span style="color:#00ff00"><span style="letter-spacing:-0.101px">Matrix_Price</span><span style="letter-spacing:-0.101px"> </span><span style="letter-spacing:-0.086px">:1|</span></span><span style="color:#ff0000"><span style="letter-spacing:-0.086px">   </span><span style="letter-spacing:-0.112px">Diff</span><span style="letter-spacing:-0.112px"> </span><span style="letter-spacing:-0.112px">:</span><span style="letter-spacing:-0.112px"> </span><span style="letter-spacing:-0.280px">0|</span><span style="letter-spacing:-0.280px"> </span><span style="letter-spacing:-0.039px">Matrix_Vol</span><span style="letter-spacing:-0.039px"> </span><span style="letter-spacing:-0.291px">:-0.4|</span><span style="letter-spacing:-0.291px">   </span><span style="letter-spacing:-0.136px">Diff</span><span style="letter-spacing:-0.136px"> </span><span style="letter-spacing:-0.136px">:</span><span style="letter-spacing:-0.136px"> </span><span style="letter-spacing:0.253px">-0.2</span></span></div>
<div class="tg" style="left:1197px;top:27px;color:#fff">97.8872</div>
<div class="tg" style="left:1197px;top:42px;color:#fff">97.5091</div>
<div class="tg" style="left:1197px;top:178px;color:#000">93.7694</div>
<div class="tg" style="left:1197px;top:525px;color:#000">0.984703</div>
<div class="tg" style="left:1197px;top:540px;color:#000">0.96828</div>
<div class="tg" style="left:1193.5px;top:709px;color:#000">-0.372698</div>
<div class="mo" style="left:187px;width:21px">Apr</div>
<div class="mo" style="left:377px;width:23px">May</div>
<div class="mo" style="left:587px;width:22px">Jun</div>
<div id="sb"><span style="color:#000"><span style="margin-left:4.99px;letter-spacing:-0.292px">Created</span><span style="letter-spacing:-0.292px"> </span><span style="letter-spacing:-0.319px">with</span><span style="letter-spacing:-0.319px"> </span><span style="letter-spacing:-0.288px">AmiBroker</span><span style="letter-spacing:-0.288px"> </span><span style="letter-spacing:-0.244px">-</span><span style="letter-spacing:-0.244px"> </span><span style="letter-spacing:-0.305px">advanced</span><span style="letter-spacing:-0.305px"> </span><span style="letter-spacing:-0.262px">charting</span><span style="letter-spacing:-0.262px"> </span><span style="letter-spacing:-0.197px">and</span><span style="letter-spacing:-0.197px"> </span><span style="letter-spacing:-0.242px">technical</span><span style="letter-spacing:-0.242px"> </span><span style="letter-spacing:-0.107px">analysis</span><span style="letter-spacing:-0.107px"> </span><span style="letter-spacing:-0.226px">software.</span><span style="letter-spacing:-0.226px"> </span><span style="letter-spacing:-0.284px">http://www.amibroker.com</span></span></div>
</body></html>
